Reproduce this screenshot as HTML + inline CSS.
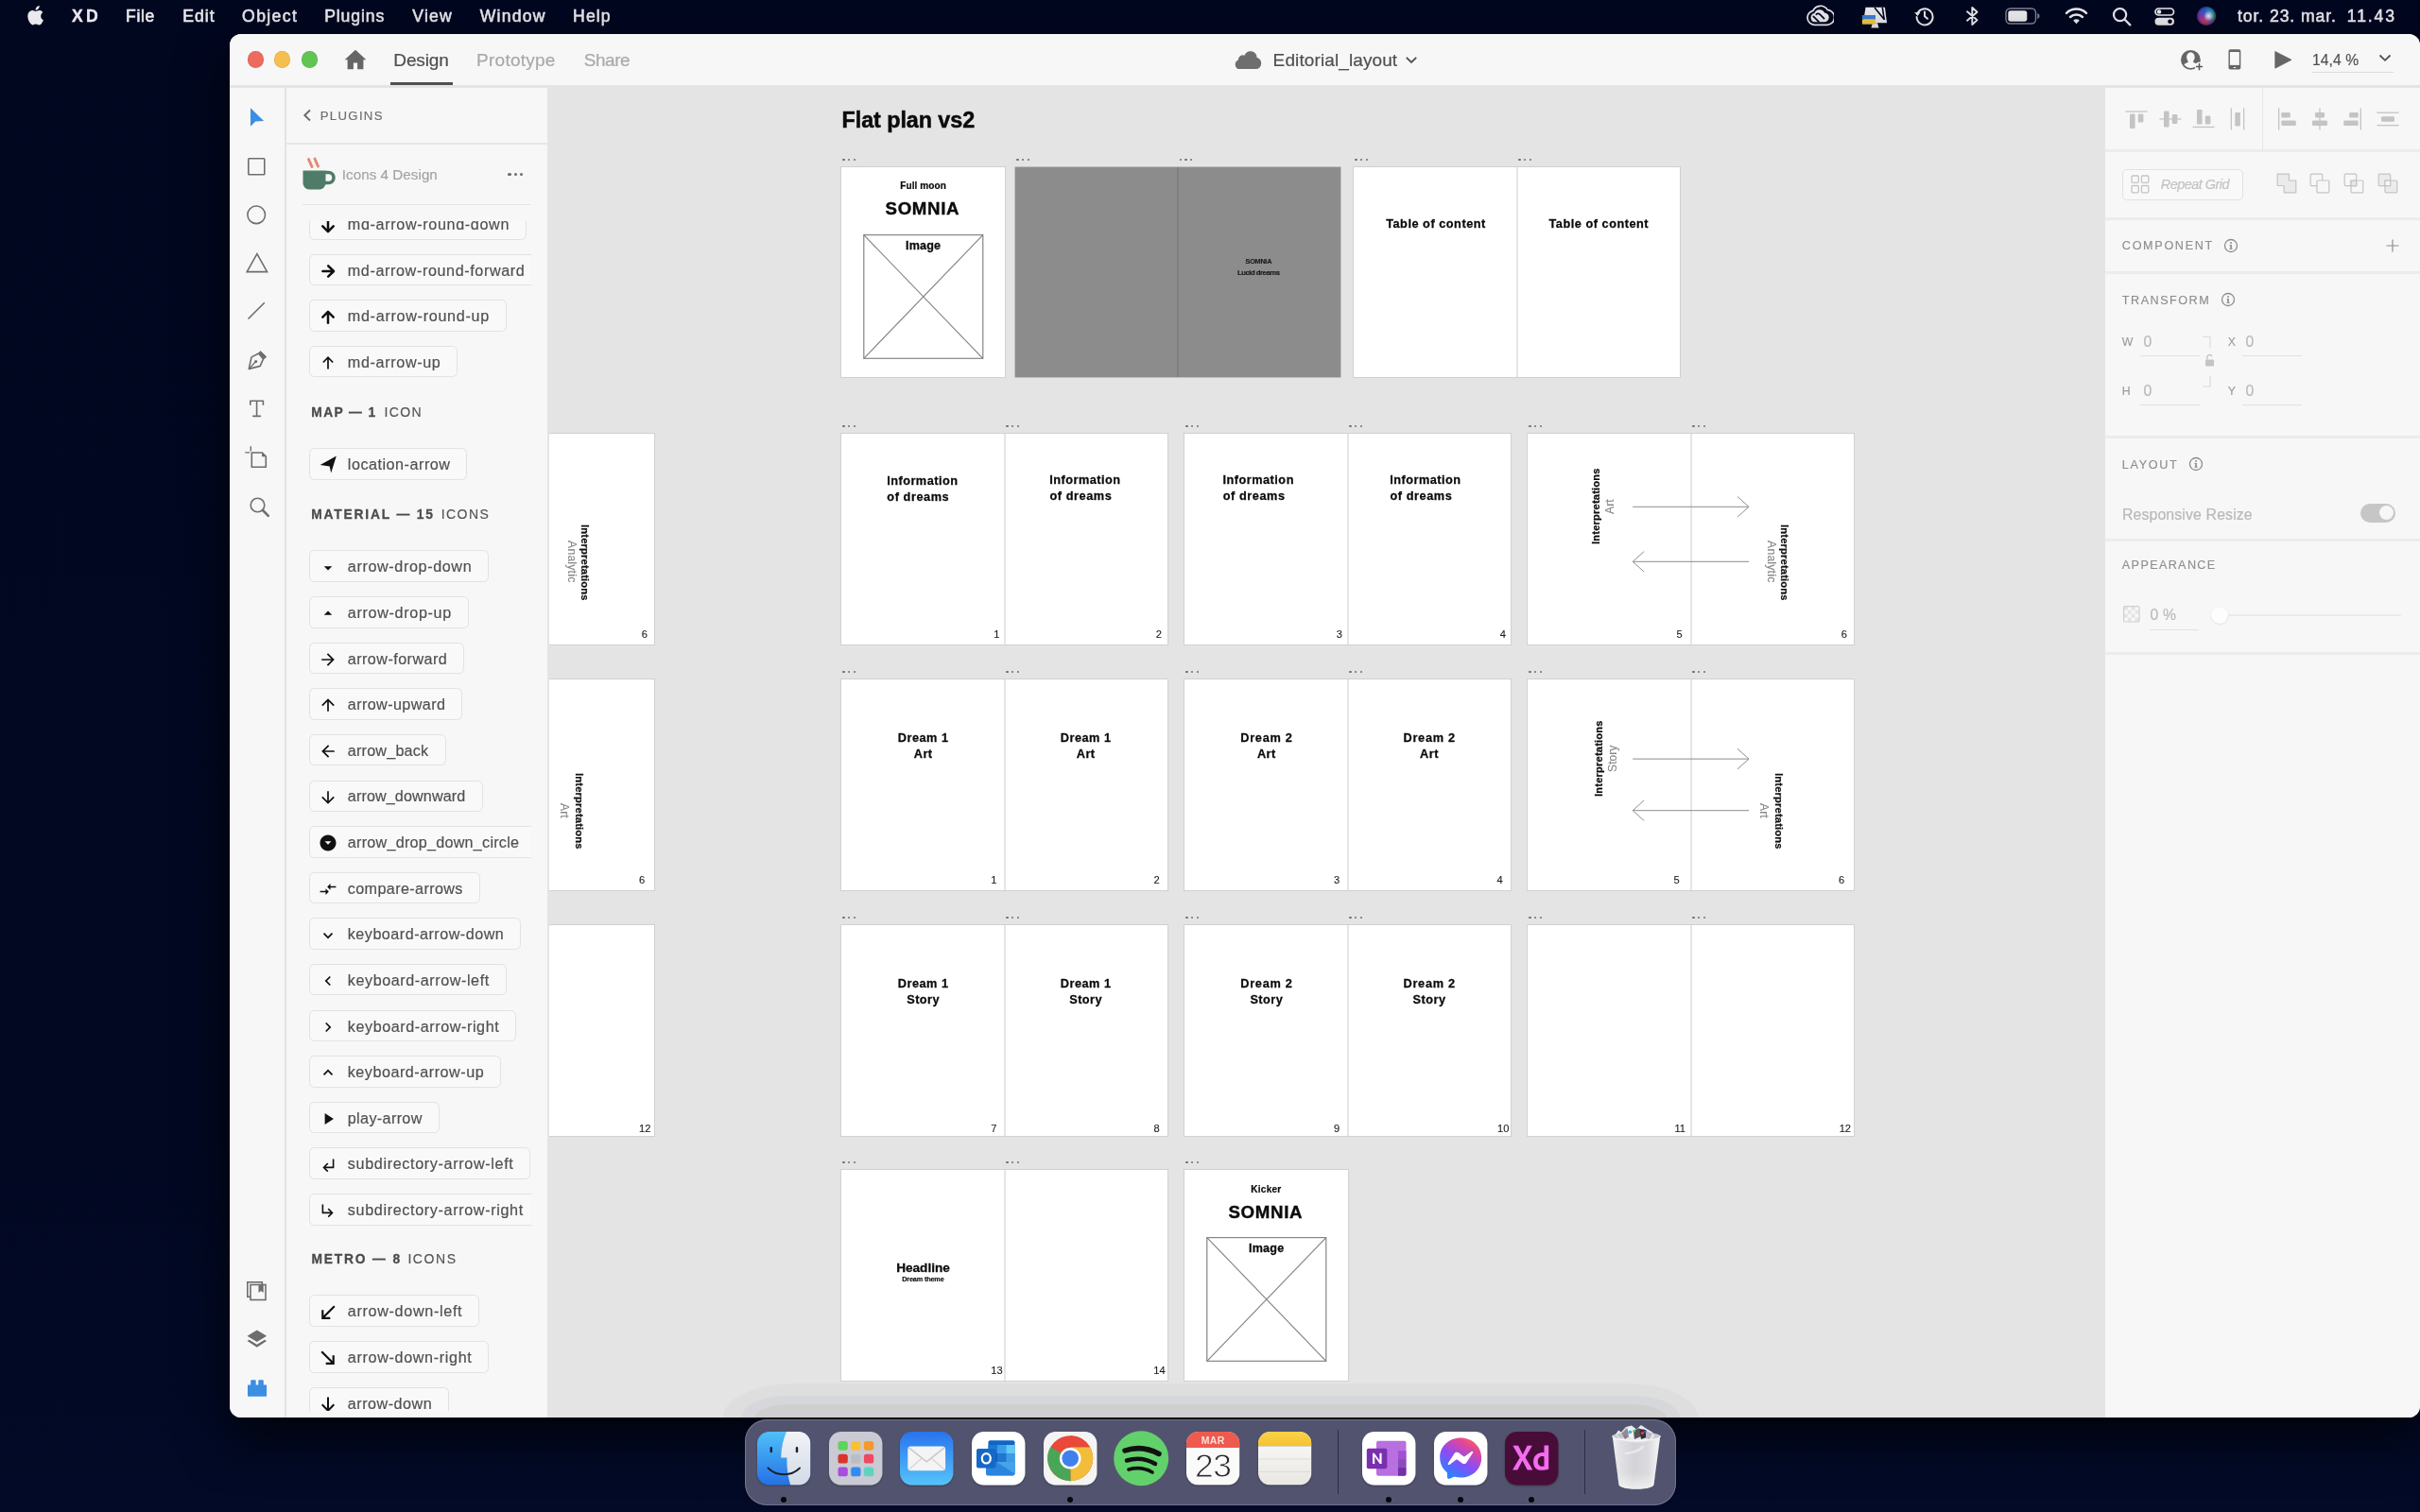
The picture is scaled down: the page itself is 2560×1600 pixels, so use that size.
<!DOCTYPE html>
<html><head><meta charset="utf-8"><title>Adobe XD - Editorial_layout</title>
<style>
*{margin:0;padding:0;box-sizing:content-box}
html,body{width:2560px;height:1600px;overflow:hidden;background:#020822;font-family:"Liberation Sans",sans-serif}
.t{position:absolute;white-space:pre;font-family:"Liberation Sans",sans-serif}
.pb{position:absolute;box-sizing:border-box;height:33.600px;border:1.400px solid #e2e2e2;border-radius:5.500px;background:#f9f9f9}
.d{position:absolute;width:2.600px;height:2.600px;border-radius:50%;background:#6f6f6f}
#desk{position:absolute;left:0;top:0;width:2560px;height:1600px;background:linear-gradient(180deg,#020720 0,#020822 1200px,#020a27 1600px)}
#win{box-shadow:0 22px 50px 4px rgba(0,0,0,.62),0 0 0 .5px rgba(0,0,0,.4);will-change:transform;position:absolute;left:243px;top:36px;width:2317px;height:1464px;border-radius:12px;background:#e4e4e4;overflow:hidden}
#tb{position:absolute;left:0;top:0;width:2317px;height:54.200px;background:#f7f7f7}
.pn{position:absolute;background:#f7f7f7}
#cv{position:absolute;left:337.500px;top:54.200px;width:1646.500px;height:1410px;overflow:hidden;background:#e4e4e4}
#cvi{position:absolute;left:-580.500px;top:-90.200px;width:2560px;height:1600px}
#abs{position:absolute;left:-243px;top:-36px;width:2560px;height:1600px}
#plc{position:absolute;left:302.500px;top:234px;width:259px;height:1258.500px;overflow:hidden}
#pli{position:absolute;left:-302.500px;top:-234px;width:2560px;height:1600px}
</style></head>
<body>
<div id="desk"></div>
<div id="menubar" style="position:absolute;left:0;top:0;width:2560px;height:34px;will-change:transform">
<svg style="position:absolute;left:27.50px;top:3.50px;" width="21" height="24" viewBox="0 0 21 24"><path fill="#e9e9ee" d="M15.2 12.9c0-2.6 2.1-3.8 2.2-3.9-1.2-1.8-3.1-2-3.7-2-1.6-.2-3.1.9-3.9.9s-2-.9-3.4-.9c-1.7 0-3.3 1-4.2 2.6-1.8 3.1-.5 7.700 1.300 10.200.9 1.200 1.900 2.600 3.200 2.600 1.300-.1 1.800-.8 3.300-.8s2 .8 3.400.8 2.300-1.300 3.100-2.500c1-1.400 1.400-2.800 1.400-2.900-.1 0-2.700-1-2.700-4.100zM12.700 5.300c.7-.900 1.200-2 1-3.200-1 .1-2.300.7-3 1.500-.7.800-1.200 2-1.100 3.100 1.200.100 2.400-.600 3.100-1.400z"/></svg>
<span class="t" style="left:75.90px;top:5.00px;font-size:17.6px;line-height:24px;color:#e9e9ee;font-weight:700;-webkit-text-stroke:0.35px #e9e9ee;letter-spacing:3.450px;">XD</span>
<span class="t" style="left:133.10px;top:5.00px;font-size:17.6px;line-height:24px;color:#e9e9ee;-webkit-text-stroke:0.55px #e9e9ee;letter-spacing:0.646px;">File</span>
<span class="t" style="left:193.30px;top:5.00px;font-size:17.6px;line-height:24px;color:#e9e9ee;-webkit-text-stroke:0.55px #e9e9ee;letter-spacing:1.024px;">Edit</span>
<span class="t" style="left:256.10px;top:5.00px;font-size:17.6px;line-height:24px;color:#e9e9ee;-webkit-text-stroke:0.55px #e9e9ee;letter-spacing:1.367px;">Object</span>
<span class="t" style="left:343.20px;top:5.00px;font-size:17.6px;line-height:24px;color:#e9e9ee;-webkit-text-stroke:0.55px #e9e9ee;letter-spacing:0.896px;">Plugins</span>
<span class="t" style="left:436.30px;top:5.00px;font-size:17.6px;line-height:24px;color:#e9e9ee;-webkit-text-stroke:0.55px #e9e9ee;letter-spacing:1.223px;">View</span>
<span class="t" style="left:507.70px;top:5.00px;font-size:17.6px;line-height:24px;color:#e9e9ee;-webkit-text-stroke:0.55px #e9e9ee;letter-spacing:1.220px;">Window</span>
<span class="t" style="left:606.10px;top:5.00px;font-size:17.6px;line-height:24px;color:#e9e9ee;-webkit-text-stroke:0.55px #e9e9ee;letter-spacing:1.101px;">Help</span>
<span class="t" style="left:2367.00px;top:5.00px;font-size:17.6px;line-height:24px;color:#e9e9ee;-webkit-text-stroke:0.5px #e9e9ee;letter-spacing:0.922px;">tor. 23. mar.</span>
<span class="t" style="left:2482.80px;top:5.00px;font-size:17.6px;line-height:24px;color:#e9e9ee;-webkit-text-stroke:0.5px #e9e9ee;letter-spacing:1.866px;">11.43</span>
<svg style="position:absolute;left:1910.00px;top:5.00px;" width="30" height="24" viewBox="0 0 30 24"><path d="M9.300 21.300a7.600 7.600 0 0 1-1.400-15 8.700 8.700 0 0 1 15.300-.9 7.600 7.600 0 0 1-1.300 15.900z" fill="none" stroke="#e9e9ee" stroke-width="1.700"/><path d="M10 18.300a4.700 4.700 0 0 1-.6-9.300 5.800 5.800 0 0 1 10.600-.5 4.800 4.800 0 0 1-.3 9.800z" fill="#e9e9ee"/><path d="M8.300 12.300l5.600 5.600M11.300 10.300a2.600 2.600 0 0 1 3.800-.2l4.500 4.500" fill="none" stroke="#02071f" stroke-width="1.700" stroke-linecap="round"/></svg>
<svg style="position:absolute;left:1968.00px;top:5.00px;" width="30" height="25" viewBox="0 0 30 25"><path d="M5.500 2.800h20.500l2 16.400H3z" fill="#e9e9ee"/><path d="M15 3l10.400 12.800M23.300 2.800l2 13.200" stroke="#02071f" stroke-width="1.600" fill="none"/><path d="M13 19.200h5l1.600 5.200h-8.200z" fill="#e9e9ee"/><rect x="1.900" y="11" width="14.100" height="4.600" fill="#3a7fd6"/><rect x="1.900" y="15.600" width="14.100" height="5.100" fill="#f2c744"/></svg>
<svg style="position:absolute;left:2024.00px;top:5.00px;" width="24" height="24" viewBox="0 0 24 24"><g fill="none" stroke="#e9e9ee" stroke-width="2" stroke-linecap="round" stroke-linejoin="round"><path d="M4.300 9.500A8.500 8.500 0 1 1 3.600 13"/><path d="M12 7.500V12.300l3 2.500"/></g><path d="M1.200 8.200l3.400 3.900 3-4.300z" fill="#e9e9ee"/></svg>
<svg style="position:absolute;left:2078.00px;top:5.00px;" width="17" height="24" viewBox="0 0 17 24"><path fill="none" stroke="#e9e9ee" stroke-width="1.900" stroke-linejoin="round" stroke-linecap="round" d="M3 7.300l10.500 9-5.200 4.700V3l5.200 4.700L3 16.700"/></svg>
<svg style="position:absolute;left:2121.00px;top:8.00px;" width="38" height="18" viewBox="0 0 38 18"><rect x="1" y="1" width="31.500" height="16" rx="4.500" fill="none" stroke="#e9e9ee" stroke-opacity=".55" stroke-width="1.400"/><rect x="3.300" y="3.300" width="20" height="11.400" rx="2.600" fill="#e9e9ee"/><path d="M34.300 6v6c1.400-.4 2.200-1.600 2.200-3s-.8-2.600-2.200-3z" fill="#e9e9ee" fill-opacity=".55"/></svg>
<svg style="position:absolute;left:2183.50px;top:7.00px;" width="25" height="19" viewBox="0 0 25 19"><g fill="none" stroke="#e9e9ee" stroke-width="2.500" stroke-linecap="round"><path d="M2 6.800a15 15 0 0 1 21 0"/><path d="M6 11a9.500 9.500 0 0 1 13 0"/></g><path d="M12.500 18.300l-3.300-3.600a4.600 4.600 0 0 1 6.600 0z" fill="#e9e9ee"/></svg>
<svg style="position:absolute;left:2233.50px;top:6.50px;" width="21" height="21" viewBox="0 0 21 21"><circle cx="8.600" cy="8.600" r="6.600" fill="none" stroke="#e9e9ee" stroke-width="2.200"/><path d="M13.500 13.500l5.800 5.800" stroke="#e9e9ee" stroke-width="2.400" stroke-linecap="round"/></svg>
<svg style="position:absolute;left:2279.00px;top:7.50px;" width="22" height="19" viewBox="0 0 22 19"><rect x="1" y="1" width="19.500" height="7" rx="3.500" fill="none" stroke="#e9e9ee" stroke-width="1.700"/><circle cx="5" cy="4.500" r="2.300" fill="#e9e9ee"/><rect x=".5" y="10.700" width="20.500" height="8" rx="4" fill="#e9e9ee"/><circle cx="16.500" cy="14.700" r="2.300" fill="#02071f"/></svg>
<div style="position:absolute;left:2324px;top:7px;width:20px;height:20px;border-radius:50%;background:radial-gradient(circle at 62% 50%,#e6e9f2 0,#b9b6e0 14%,rgba(120,110,200,0) 34%),conic-gradient(from 200deg at 50% 50%,#c23a6a,#7a3ab0 20%,#2f5fc8 40%,#2aa0b8 58%,#3a9a70 70%,#7a4a9a 84%,#c23a6a);box-shadow:inset 0 0 3px 1px rgba(10,10,40,.55)"></div>
</div>
<div id="win">
 <div id="tb"></div>
 <div class="pn" style="left:0;top:56.500px;width:57.500px;height:1408px"></div>
 <div class="pn" style="left:59.500px;top:56.500px;width:276px;height:1408px"></div>
 <div id="cv"><div id="cvi">
<span class="t" style="left:890.54px;top:112.00px;font-size:23.34px;line-height:30px;color:#0b0b0b;font-weight:700;-webkit-text-stroke:0.48px #0b0b0b;letter-spacing:-0.056px;">Flat plan vs2</span>
<div style="position:absolute;left:890.00px;top:177.00px;width:172.70px;height:222.00px;background:#fff;box-shadow:0 0 0 1px #d1d1d1"></div><i class="d" style="left:891.3px;top:167.8px"></i><i class="d" style="left:896.9px;top:167.8px"></i><i class="d" style="left:902.5px;top:167.8px"></i>
<span class="t" style="left:952.20px;top:189.00px;font-size:10.02px;line-height:15px;color:#0b0b0b;font-weight:700;-webkit-text-stroke:0.21px #0b0b0b;letter-spacing:0.103px;">Full moon</span>
<span class="t" style="left:936.54px;top:208.00px;font-size:18.67px;line-height:25px;color:#0b0b0b;font-weight:700;-webkit-text-stroke:0.38px #0b0b0b;letter-spacing:0.668px;">SOMNIA</span>
<svg style="position:absolute;left:913.00px;top:247.50px;" width="128" height="133" viewBox="0 0 128 133"><g fill="none" stroke="#858585" stroke-width="1.200"><rect x=".8" y=".6" width="126" height="130.700"/><path d="M.8 .6l126 130.700M126.800 .6L.8 131.300"/></g></svg>
<span class="t" style="left:958.03px;top:251.00px;font-size:12.55px;line-height:18px;color:#0b0b0b;font-weight:700;-webkit-text-stroke:0.26px #0b0b0b;letter-spacing:0.192px;">Image</span>
<div style="position:absolute;left:1073.70px;top:176.80px;width:344.70px;height:222.70px;background:#8c8c8c;box-shadow:0 0 0 .5px #9a9a9a"></div><i class="d" style="left:1075.3px;top:167.8px"></i><i class="d" style="left:1080.9px;top:167.8px"></i><i class="d" style="left:1086.5px;top:167.8px"></i><i class="d" style="left:1247.6px;top:167.8px"></i><i class="d" style="left:1253.2px;top:167.8px"></i><i class="d" style="left:1258.8px;top:167.8px"></i>
<div style="position:absolute;left:1244.90px;top:177.00px;width:1.80px;height:222.00px;background:#808080"></div>
<span class="t" style="left:1317.58px;top:270.00px;font-size:7.29px;line-height:13px;color:#1c1c1c;font-weight:700;-webkit-text-stroke:0.15px #1c1c1c;letter-spacing:-0.262px;">SOMNIA</span>
<span class="t" style="left:1308.88px;top:282.00px;font-size:7.78px;line-height:13px;color:#1c1c1c;font-weight:700;-webkit-text-stroke:0.16px #1c1c1c;letter-spacing:-0.486px;">Lucid dreams</span>
<div style="position:absolute;left:1432.00px;top:177.00px;width:172.20px;height:222.00px;background:#fff;box-shadow:0 0 0 1px #d1d1d1"></div><i class="d" style="left:1433.3px;top:167.8px"></i><i class="d" style="left:1438.9px;top:167.8px"></i><i class="d" style="left:1444.5px;top:167.8px"></i>
<div style="position:absolute;left:1605.00px;top:177.00px;width:172.20px;height:222.00px;background:#fff;box-shadow:0 0 0 1px #d1d1d1"></div><i class="d" style="left:1606.3px;top:167.8px"></i><i class="d" style="left:1611.9px;top:167.8px"></i><i class="d" style="left:1617.5px;top:167.8px"></i>
<div style="position:absolute;left:1603.50px;top:177.00px;width:2.40px;height:222.00px;background:#e5e5e8"></div>
<span class="t" style="left:1466.18px;top:227.00px;font-size:12.74px;line-height:19px;color:#0b0b0b;font-weight:700;-webkit-text-stroke:0.26px #0b0b0b;letter-spacing:0.513px;">Table of content</span>
<span class="t" style="left:1638.53px;top:227.00px;font-size:12.74px;line-height:19px;color:#0b0b0b;font-weight:700;-webkit-text-stroke:0.26px #0b0b0b;letter-spacing:0.513px;">Table of content</span>
<div style="position:absolute;left:890.00px;top:459.00px;width:172.00px;height:223.00px;background:#fff;box-shadow:0 0 0 1px #d1d1d1"></div><i class="d" style="left:891.3px;top:449.8px"></i><i class="d" style="left:896.9px;top:449.8px"></i><i class="d" style="left:902.5px;top:449.8px"></i>
<div style="position:absolute;left:1063.00px;top:459.00px;width:172.00px;height:223.00px;background:#fff;box-shadow:0 0 0 1px #d1d1d1"></div><i class="d" style="left:1064.3px;top:449.8px"></i><i class="d" style="left:1069.9px;top:449.8px"></i><i class="d" style="left:1075.5px;top:449.8px"></i>
<div style="position:absolute;left:1253.00px;top:459.00px;width:172.00px;height:223.00px;background:#fff;box-shadow:0 0 0 1px #d1d1d1"></div><i class="d" style="left:1254.3px;top:449.8px"></i><i class="d" style="left:1259.9px;top:449.8px"></i><i class="d" style="left:1265.5px;top:449.8px"></i>
<div style="position:absolute;left:1426.00px;top:459.00px;width:172.00px;height:223.00px;background:#fff;box-shadow:0 0 0 1px #d1d1d1"></div><i class="d" style="left:1427.3px;top:449.8px"></i><i class="d" style="left:1432.9px;top:449.8px"></i><i class="d" style="left:1438.5px;top:449.8px"></i>
<div style="position:absolute;left:1616.00px;top:459.00px;width:172.00px;height:223.00px;background:#fff;box-shadow:0 0 0 1px #d1d1d1"></div><i class="d" style="left:1617.3px;top:449.8px"></i><i class="d" style="left:1622.9px;top:449.8px"></i><i class="d" style="left:1628.5px;top:449.8px"></i>
<div style="position:absolute;left:1789.00px;top:459.00px;width:172.00px;height:223.00px;background:#fff;box-shadow:0 0 0 1px #d1d1d1"></div><i class="d" style="left:1790.3px;top:449.8px"></i><i class="d" style="left:1795.9px;top:449.8px"></i><i class="d" style="left:1801.5px;top:449.8px"></i>
<div style="position:absolute;left:1061.50px;top:459.00px;width:2.40px;height:223.00px;background:#e5e5e8"></div>
<div style="position:absolute;left:1424.50px;top:459.00px;width:2.40px;height:223.00px;background:#e5e5e8"></div>
<div style="position:absolute;left:1787.50px;top:459.00px;width:2.40px;height:223.00px;background:#e5e5e8"></div>
<div style="position:absolute;left:890.00px;top:719.00px;width:172.00px;height:223.00px;background:#fff;box-shadow:0 0 0 1px #d1d1d1"></div><i class="d" style="left:891.3px;top:709.8px"></i><i class="d" style="left:896.9px;top:709.8px"></i><i class="d" style="left:902.5px;top:709.8px"></i>
<div style="position:absolute;left:1063.00px;top:719.00px;width:172.00px;height:223.00px;background:#fff;box-shadow:0 0 0 1px #d1d1d1"></div><i class="d" style="left:1064.3px;top:709.8px"></i><i class="d" style="left:1069.9px;top:709.8px"></i><i class="d" style="left:1075.5px;top:709.8px"></i>
<div style="position:absolute;left:1253.00px;top:719.00px;width:172.00px;height:223.00px;background:#fff;box-shadow:0 0 0 1px #d1d1d1"></div><i class="d" style="left:1254.3px;top:709.8px"></i><i class="d" style="left:1259.9px;top:709.8px"></i><i class="d" style="left:1265.5px;top:709.8px"></i>
<div style="position:absolute;left:1426.00px;top:719.00px;width:172.00px;height:223.00px;background:#fff;box-shadow:0 0 0 1px #d1d1d1"></div><i class="d" style="left:1427.3px;top:709.8px"></i><i class="d" style="left:1432.9px;top:709.8px"></i><i class="d" style="left:1438.5px;top:709.8px"></i>
<div style="position:absolute;left:1616.00px;top:719.00px;width:172.00px;height:223.00px;background:#fff;box-shadow:0 0 0 1px #d1d1d1"></div><i class="d" style="left:1617.3px;top:709.8px"></i><i class="d" style="left:1622.9px;top:709.8px"></i><i class="d" style="left:1628.5px;top:709.8px"></i>
<div style="position:absolute;left:1789.00px;top:719.00px;width:172.00px;height:223.00px;background:#fff;box-shadow:0 0 0 1px #d1d1d1"></div><i class="d" style="left:1790.3px;top:709.8px"></i><i class="d" style="left:1795.9px;top:709.8px"></i><i class="d" style="left:1801.5px;top:709.8px"></i>
<div style="position:absolute;left:1061.50px;top:719.00px;width:2.40px;height:223.00px;background:#e5e5e8"></div>
<div style="position:absolute;left:1424.50px;top:719.00px;width:2.40px;height:223.00px;background:#e5e5e8"></div>
<div style="position:absolute;left:1787.50px;top:719.00px;width:2.40px;height:223.00px;background:#e5e5e8"></div>
<div style="position:absolute;left:890.00px;top:979.00px;width:172.00px;height:223.00px;background:#fff;box-shadow:0 0 0 1px #d1d1d1"></div><i class="d" style="left:891.3px;top:969.8px"></i><i class="d" style="left:896.9px;top:969.8px"></i><i class="d" style="left:902.5px;top:969.8px"></i>
<div style="position:absolute;left:1063.00px;top:979.00px;width:172.00px;height:223.00px;background:#fff;box-shadow:0 0 0 1px #d1d1d1"></div><i class="d" style="left:1064.3px;top:969.8px"></i><i class="d" style="left:1069.9px;top:969.8px"></i><i class="d" style="left:1075.5px;top:969.8px"></i>
<div style="position:absolute;left:1253.00px;top:979.00px;width:172.00px;height:223.00px;background:#fff;box-shadow:0 0 0 1px #d1d1d1"></div><i class="d" style="left:1254.3px;top:969.8px"></i><i class="d" style="left:1259.9px;top:969.8px"></i><i class="d" style="left:1265.5px;top:969.8px"></i>
<div style="position:absolute;left:1426.00px;top:979.00px;width:172.00px;height:223.00px;background:#fff;box-shadow:0 0 0 1px #d1d1d1"></div><i class="d" style="left:1427.3px;top:969.8px"></i><i class="d" style="left:1432.9px;top:969.8px"></i><i class="d" style="left:1438.5px;top:969.8px"></i>
<div style="position:absolute;left:1616.00px;top:979.00px;width:172.00px;height:223.00px;background:#fff;box-shadow:0 0 0 1px #d1d1d1"></div><i class="d" style="left:1617.3px;top:969.8px"></i><i class="d" style="left:1622.9px;top:969.8px"></i><i class="d" style="left:1628.5px;top:969.8px"></i>
<div style="position:absolute;left:1789.00px;top:979.00px;width:172.00px;height:223.00px;background:#fff;box-shadow:0 0 0 1px #d1d1d1"></div><i class="d" style="left:1790.3px;top:969.8px"></i><i class="d" style="left:1795.9px;top:969.8px"></i><i class="d" style="left:1801.5px;top:969.8px"></i>
<div style="position:absolute;left:1061.50px;top:979.00px;width:2.40px;height:223.00px;background:#e5e5e8"></div>
<div style="position:absolute;left:1424.50px;top:979.00px;width:2.40px;height:223.00px;background:#e5e5e8"></div>
<div style="position:absolute;left:1787.50px;top:979.00px;width:2.40px;height:223.00px;background:#e5e5e8"></div>
<div style="position:absolute;left:519.90px;top:459.00px;width:172.00px;height:223.00px;background:#fff;box-shadow:0 0 0 1px #d1d1d1"></div>
<div style="position:absolute;left:519.90px;top:719.00px;width:172.00px;height:223.00px;background:#fff;box-shadow:0 0 0 1px #d1d1d1"></div>
<div style="position:absolute;left:519.90px;top:979.00px;width:172.00px;height:223.00px;background:#fff;box-shadow:0 0 0 1px #d1d1d1"></div>
<span class="t" style="left:938.13px;top:499.00px;font-size:12.74px;line-height:19px;color:#0b0b0b;font-weight:700;-webkit-text-stroke:0.26px #0b0b0b;letter-spacing:0.487px;">Information</span>
<span class="t" style="left:938.33px;top:516.00px;font-size:12.74px;line-height:19px;color:#0b0b0b;font-weight:700;-webkit-text-stroke:0.26px #0b0b0b;letter-spacing:0.556px;">of dreams</span>
<span class="t" style="left:1110.23px;top:498.00px;font-size:12.74px;line-height:19px;color:#0b0b0b;font-weight:700;-webkit-text-stroke:0.26px #0b0b0b;letter-spacing:0.487px;">Information</span>
<span class="t" style="left:1110.43px;top:515.00px;font-size:12.74px;line-height:19px;color:#0b0b0b;font-weight:700;-webkit-text-stroke:0.26px #0b0b0b;letter-spacing:0.556px;">of dreams</span>
<span class="t" style="left:1293.53px;top:498.00px;font-size:12.74px;line-height:19px;color:#0b0b0b;font-weight:700;-webkit-text-stroke:0.26px #0b0b0b;letter-spacing:0.487px;">Information</span>
<span class="t" style="left:1293.73px;top:515.00px;font-size:12.74px;line-height:19px;color:#0b0b0b;font-weight:700;-webkit-text-stroke:0.26px #0b0b0b;letter-spacing:0.556px;">of dreams</span>
<span class="t" style="left:1470.23px;top:498.00px;font-size:12.74px;line-height:19px;color:#0b0b0b;font-weight:700;-webkit-text-stroke:0.26px #0b0b0b;letter-spacing:0.487px;">Information</span>
<span class="t" style="left:1470.43px;top:515.00px;font-size:12.74px;line-height:19px;color:#0b0b0b;font-weight:700;-webkit-text-stroke:0.26px #0b0b0b;letter-spacing:0.556px;">of dreams</span>
<svg style="position:absolute;left:0;top:0" width="2560" height="1600" viewBox="0 0 2560 1600"><g fill="none" stroke="#8c8c8c" stroke-width="1"><path d="M1727.2 536.3H1850M1838 525.5L1850 536.3L1838 547.0999999999999"/><path d="M1850 594.3H1727.2M1739.2 583.5L1727.2 594.3L1739.2 605.0999999999999"/></g></svg>
<div style="position:absolute;left:1691.60px;top:576.30px;width:0;height:0;transform:rotate(-90deg);transform-origin:0 0"><span class="t" style="left:0.12px;top:-12.00px;font-size:11.18px;line-height:16px;color:#0b0b0b;font-weight:700;-webkit-text-stroke:0.23px #0b0b0b;letter-spacing:0.150px;">Interpretations</span></div>
<div style="position:absolute;left:1707.40px;top:544.20px;width:0;height:0;transform:rotate(-90deg);transform-origin:0 0"><span class="t" style="left:0.07px;top:-13.00px;font-size:12.11px;line-height:18px;color:#868686;-webkit-text-stroke:0.14px #868686;letter-spacing:0.092px;">Art</span></div>
<div style="position:absolute;left:1883.90px;top:554.60px;width:0;height:0;transform:rotate(90deg);transform-origin:0 0"><span class="t" style="left:0.12px;top:-12.00px;font-size:11.18px;line-height:16px;color:#111;font-weight:700;-webkit-text-stroke:0.23px #111;letter-spacing:0.150px;">Interpretations</span></div><div style="position:absolute;left:1870.10px;top:572.00px;width:0;height:0;transform:rotate(90deg);transform-origin:0 0"><span class="t" style="left:0.07px;top:-13.00px;font-size:12.11px;line-height:18px;color:#868686;-webkit-text-stroke:0.14px #868686;letter-spacing:0.251px;">Analytic</span></div>
<div style="position:absolute;left:614.80px;top:554.60px;width:0;height:0;transform:rotate(90deg);transform-origin:0 0"><span class="t" style="left:0.12px;top:-12.00px;font-size:11.18px;line-height:16px;color:#111;font-weight:700;-webkit-text-stroke:0.23px #111;letter-spacing:0.150px;">Interpretations</span></div><div style="position:absolute;left:601.00px;top:572.00px;width:0;height:0;transform:rotate(90deg);transform-origin:0 0"><span class="t" style="left:0.07px;top:-13.00px;font-size:12.11px;line-height:18px;color:#868686;-webkit-text-stroke:0.14px #868686;letter-spacing:0.251px;">Analytic</span></div>
<span class="t" style="left:678.86px;top:663.00px;font-size:11.13px;line-height:16px;color:#1e1e1e;-webkit-text-stroke:0.12px #1e1e1e;">6</span>
<span class="t" style="left:1051.26px;top:663.00px;font-size:11.13px;line-height:16px;color:#1e1e1e;-webkit-text-stroke:0.12px #1e1e1e;">1</span>
<span class="t" style="left:1222.76px;top:663.00px;font-size:11.13px;line-height:16px;color:#1e1e1e;-webkit-text-stroke:0.12px #1e1e1e;">2</span>
<span class="t" style="left:1413.76px;top:663.00px;font-size:11.13px;line-height:16px;color:#1e1e1e;-webkit-text-stroke:0.12px #1e1e1e;">3</span>
<span class="t" style="left:1586.66px;top:663.00px;font-size:11.13px;line-height:16px;color:#1e1e1e;-webkit-text-stroke:0.12px #1e1e1e;">4</span>
<span class="t" style="left:1773.56px;top:663.00px;font-size:11.13px;line-height:16px;color:#1e1e1e;-webkit-text-stroke:0.12px #1e1e1e;">5</span>
<span class="t" style="left:1947.76px;top:663.00px;font-size:11.13px;line-height:16px;color:#1e1e1e;-webkit-text-stroke:0.12px #1e1e1e;">6</span>
<span class="t" style="left:949.78px;top:771.00px;font-size:12.74px;line-height:19px;color:#0b0b0b;font-weight:700;-webkit-text-stroke:0.26px #0b0b0b;letter-spacing:0.493px;">Dream 1</span>
<span class="t" style="left:966.68px;top:788.00px;font-size:12.74px;line-height:19px;color:#0b0b0b;font-weight:700;-webkit-text-stroke:0.26px #0b0b0b;letter-spacing:0.519px;">Art</span>
<span class="t" style="left:1121.78px;top:771.00px;font-size:12.74px;line-height:19px;color:#0b0b0b;font-weight:700;-webkit-text-stroke:0.26px #0b0b0b;letter-spacing:0.493px;">Dream 1</span>
<span class="t" style="left:1138.68px;top:788.00px;font-size:12.74px;line-height:19px;color:#0b0b0b;font-weight:700;-webkit-text-stroke:0.26px #0b0b0b;letter-spacing:0.519px;">Art</span>
<span class="t" style="left:1312.28px;top:771.00px;font-size:12.74px;line-height:19px;color:#0b0b0b;font-weight:700;-webkit-text-stroke:0.26px #0b0b0b;letter-spacing:0.726px;">Dream 2</span>
<span class="t" style="left:1329.88px;top:788.00px;font-size:12.74px;line-height:19px;color:#0b0b0b;font-weight:700;-webkit-text-stroke:0.26px #0b0b0b;letter-spacing:0.519px;">Art</span>
<span class="t" style="left:1484.48px;top:771.00px;font-size:12.74px;line-height:19px;color:#0b0b0b;font-weight:700;-webkit-text-stroke:0.26px #0b0b0b;letter-spacing:0.726px;">Dream 2</span>
<span class="t" style="left:1502.08px;top:788.00px;font-size:12.74px;line-height:19px;color:#0b0b0b;font-weight:700;-webkit-text-stroke:0.26px #0b0b0b;letter-spacing:0.519px;">Art</span>
<svg style="position:absolute;left:0;top:0" width="2560" height="1600" viewBox="0 0 2560 1600"><g fill="none" stroke="#8c8c8c" stroke-width="1"><path d="M1727.2 803.1H1850M1838 792.3000000000001L1850 803.1L1838 813.9"/><path d="M1850 857.7H1727.2M1739.2 846.9000000000001L1727.2 857.7L1739.2 868.5"/></g></svg>
<div style="position:absolute;left:1695.30px;top:843.10px;width:0;height:0;transform:rotate(-90deg);transform-origin:0 0"><span class="t" style="left:0.12px;top:-12.00px;font-size:11.18px;line-height:16px;color:#0b0b0b;font-weight:700;-webkit-text-stroke:0.23px #0b0b0b;letter-spacing:0.150px;">Interpretations</span></div>
<div style="position:absolute;left:1709.50px;top:817.10px;width:0;height:0;transform:rotate(-90deg);transform-origin:0 0"><span class="t" style="left:0.07px;top:-13.00px;font-size:12.11px;line-height:18px;color:#868686;-webkit-text-stroke:0.14px #868686;letter-spacing:0.024px;">Story</span></div>
<div style="position:absolute;left:1877.70px;top:817.70px;width:0;height:0;transform:rotate(90deg);transform-origin:0 0"><span class="t" style="left:0.12px;top:-12.00px;font-size:11.18px;line-height:16px;color:#111;font-weight:700;-webkit-text-stroke:0.23px #111;letter-spacing:0.150px;">Interpretations</span></div><div style="position:absolute;left:1862.00px;top:850.20px;width:0;height:0;transform:rotate(90deg);transform-origin:0 0"><span class="t" style="left:0.07px;top:-13.00px;font-size:12.11px;line-height:18px;color:#868686;-webkit-text-stroke:0.14px #868686;letter-spacing:0.092px;">Art</span></div>
<div style="position:absolute;left:608.60px;top:817.70px;width:0;height:0;transform:rotate(90deg);transform-origin:0 0"><span class="t" style="left:0.12px;top:-12.00px;font-size:11.18px;line-height:16px;color:#111;font-weight:700;-webkit-text-stroke:0.23px #111;letter-spacing:0.150px;">Interpretations</span></div><div style="position:absolute;left:592.90px;top:850.20px;width:0;height:0;transform:rotate(90deg);transform-origin:0 0"><span class="t" style="left:0.07px;top:-13.00px;font-size:12.11px;line-height:18px;color:#868686;-webkit-text-stroke:0.14px #868686;letter-spacing:0.092px;">Art</span></div>
<span class="t" style="left:676.06px;top:923.00px;font-size:11.13px;line-height:16px;color:#1e1e1e;-webkit-text-stroke:0.12px #1e1e1e;">6</span>
<span class="t" style="left:1048.36px;top:923.00px;font-size:11.13px;line-height:16px;color:#1e1e1e;-webkit-text-stroke:0.12px #1e1e1e;">1</span>
<span class="t" style="left:1220.46px;top:923.00px;font-size:11.13px;line-height:16px;color:#1e1e1e;-webkit-text-stroke:0.12px #1e1e1e;">2</span>
<span class="t" style="left:1410.96px;top:923.00px;font-size:11.13px;line-height:16px;color:#1e1e1e;-webkit-text-stroke:0.12px #1e1e1e;">3</span>
<span class="t" style="left:1583.56px;top:923.00px;font-size:11.13px;line-height:16px;color:#1e1e1e;-webkit-text-stroke:0.12px #1e1e1e;">4</span>
<span class="t" style="left:1770.46px;top:923.00px;font-size:11.13px;line-height:16px;color:#1e1e1e;-webkit-text-stroke:0.12px #1e1e1e;">5</span>
<span class="t" style="left:1944.96px;top:923.00px;font-size:11.13px;line-height:16px;color:#1e1e1e;-webkit-text-stroke:0.12px #1e1e1e;">6</span>
<span class="t" style="left:949.78px;top:1031.00px;font-size:12.74px;line-height:19px;color:#0b0b0b;font-weight:700;-webkit-text-stroke:0.26px #0b0b0b;letter-spacing:0.493px;">Dream 1</span>
<span class="t" style="left:959.18px;top:1048.00px;font-size:12.74px;line-height:19px;color:#0b0b0b;font-weight:700;-webkit-text-stroke:0.26px #0b0b0b;letter-spacing:0.468px;">Story</span>
<span class="t" style="left:1121.78px;top:1031.00px;font-size:12.74px;line-height:19px;color:#0b0b0b;font-weight:700;-webkit-text-stroke:0.26px #0b0b0b;letter-spacing:0.493px;">Dream 1</span>
<span class="t" style="left:1131.18px;top:1048.00px;font-size:12.74px;line-height:19px;color:#0b0b0b;font-weight:700;-webkit-text-stroke:0.26px #0b0b0b;letter-spacing:0.468px;">Story</span>
<span class="t" style="left:1312.28px;top:1031.00px;font-size:12.74px;line-height:19px;color:#0b0b0b;font-weight:700;-webkit-text-stroke:0.26px #0b0b0b;letter-spacing:0.726px;">Dream 2</span>
<span class="t" style="left:1322.38px;top:1048.00px;font-size:12.74px;line-height:19px;color:#0b0b0b;font-weight:700;-webkit-text-stroke:0.26px #0b0b0b;letter-spacing:0.468px;">Story</span>
<span class="t" style="left:1484.48px;top:1031.00px;font-size:12.74px;line-height:19px;color:#0b0b0b;font-weight:700;-webkit-text-stroke:0.26px #0b0b0b;letter-spacing:0.726px;">Dream 2</span>
<span class="t" style="left:1494.58px;top:1048.00px;font-size:12.74px;line-height:19px;color:#0b0b0b;font-weight:700;-webkit-text-stroke:0.26px #0b0b0b;letter-spacing:0.468px;">Story</span>
<span class="t" style="left:676.06px;top:1186.00px;font-size:11.13px;line-height:16px;color:#1e1e1e;-webkit-text-stroke:0.12px #1e1e1e;">12</span>
<span class="t" style="left:1048.26px;top:1186.00px;font-size:11.13px;line-height:16px;color:#1e1e1e;-webkit-text-stroke:0.12px #1e1e1e;">7</span>
<span class="t" style="left:1220.46px;top:1186.00px;font-size:11.13px;line-height:16px;color:#1e1e1e;-webkit-text-stroke:0.12px #1e1e1e;">8</span>
<span class="t" style="left:1410.96px;top:1186.00px;font-size:11.13px;line-height:16px;color:#1e1e1e;-webkit-text-stroke:0.12px #1e1e1e;">9</span>
<span class="t" style="left:1583.96px;top:1186.00px;font-size:11.13px;line-height:16px;color:#1e1e1e;-webkit-text-stroke:0.12px #1e1e1e;">10</span>
<span class="t" style="left:1771.46px;top:1186.00px;font-size:11.13px;line-height:16px;color:#1e1e1e;-webkit-text-stroke:0.12px #1e1e1e;">11</span>
<span class="t" style="left:1945.66px;top:1186.00px;font-size:11.13px;line-height:16px;color:#1e1e1e;-webkit-text-stroke:0.12px #1e1e1e;">12</span>
<div style="position:absolute;left:890.00px;top:1238.00px;width:172.00px;height:223.00px;background:#fff;box-shadow:0 0 0 1px #d1d1d1"></div><i class="d" style="left:891.3px;top:1228.8px"></i><i class="d" style="left:896.9px;top:1228.8px"></i><i class="d" style="left:902.5px;top:1228.8px"></i>
<div style="position:absolute;left:1063.00px;top:1238.00px;width:172.00px;height:223.00px;background:#fff;box-shadow:0 0 0 1px #d1d1d1"></div><i class="d" style="left:1064.3px;top:1228.8px"></i><i class="d" style="left:1069.9px;top:1228.8px"></i><i class="d" style="left:1075.5px;top:1228.8px"></i>
<div style="position:absolute;left:1061.50px;top:1238.00px;width:2.40px;height:223.00px;background:#e5e5e8"></div>
<div style="position:absolute;left:1253.00px;top:1238.00px;width:173.00px;height:223.00px;background:#fff;box-shadow:0 0 0 1px #d1d1d1"></div><i class="d" style="left:1254.3px;top:1228.8px"></i><i class="d" style="left:1259.9px;top:1228.8px"></i><i class="d" style="left:1265.5px;top:1228.8px"></i>
<span class="t" style="left:948.14px;top:1332.00px;font-size:13.62px;line-height:19px;color:#0b0b0b;font-weight:700;-webkit-text-stroke:0.28px #0b0b0b;letter-spacing:-0.007px;">Headline</span>
<span class="t" style="left:954.23px;top:1347.00px;font-size:7.29px;line-height:13px;color:#0b0b0b;font-weight:700;-webkit-text-stroke:0.15px #0b0b0b;letter-spacing:-0.164px;">Dream theme</span>
<span class="t" style="left:1048.26px;top:1442.00px;font-size:11.13px;line-height:16px;color:#1e1e1e;-webkit-text-stroke:0.12px #1e1e1e;">13</span>
<span class="t" style="left:1220.36px;top:1442.00px;font-size:11.13px;line-height:16px;color:#1e1e1e;-webkit-text-stroke:0.12px #1e1e1e;">14</span>
<span class="t" style="left:1323.31px;top:1251.00px;font-size:10.02px;line-height:15px;color:#0b0b0b;font-weight:700;-webkit-text-stroke:0.21px #0b0b0b;letter-spacing:0.270px;">Kicker</span>
<span class="t" style="left:1299.49px;top:1270.00px;font-size:18.67px;line-height:25px;color:#0b0b0b;font-weight:700;-webkit-text-stroke:0.38px #0b0b0b;letter-spacing:0.668px;">SOMNIA</span>
<svg style="position:absolute;left:1276.30px;top:1309.30px;" width="128" height="133" viewBox="0 0 128 133"><g fill="none" stroke="#858585" stroke-width="1.200"><rect x=".8" y=".6" width="126" height="130.700"/><path d="M.8 .6l126 130.700M126.800 .6L.8 131.300"/></g></svg>
<span class="t" style="left:1321.08px;top:1312.00px;font-size:12.55px;line-height:18px;color:#0b0b0b;font-weight:700;-webkit-text-stroke:0.26px #0b0b0b;letter-spacing:0.192px;">Image</span>
<div style="position:absolute;left:764.8px;top:1464.1px;width:1031.2px;height:37.9px;background:#dedede;border-radius:76px 76px 0 0/36px 36px 0 0"></div><div style="position:absolute;left:783.6px;top:1477px;width:993.6px;height:25.0px;background:#d6d7da;border-radius:50px 50px 0 0/23px 23px 0 0"></div><div style="position:absolute;left:798.2px;top:1485.6px;width:964.4px;height:16.4px;background:#cfcfd0;border-radius:40px 40px 0 0/14.5px 14.5px 0 0"></div>
 </div></div>
 <div class="pn" style="left:1984px;top:56.500px;width:333px;height:1408px"></div>
 <div id="abs">
<div style="position:absolute;left:261.5px;top:54.2px;width:17.4px;height:17.4px;border-radius:50%;background:#ed6a5e;box-shadow:inset 0 0 0 .6px rgba(0,0,0,.12)"></div>
<div style="position:absolute;left:290.0px;top:54.2px;width:17.4px;height:17.4px;border-radius:50%;background:#f5bf4f;box-shadow:inset 0 0 0 .6px rgba(0,0,0,.12)"></div>
<div style="position:absolute;left:318.5px;top:54.2px;width:17.4px;height:17.4px;border-radius:50%;background:#61c554;box-shadow:inset 0 0 0 .6px rgba(0,0,0,.12)"></div>
<svg style="position:absolute;left:363.50px;top:51.50px;" width="24" height="22" viewBox="0 0 24 22"><path fill="#666" d="M12 .8L.6 11.200h3v10h6.300v-6.700h4.200v6.700h6.300v-10h3z"/></svg>
<span class="t" style="left:416.31px;top:51.00px;font-size:19.01px;line-height:25px;color:#505050;-webkit-text-stroke:0.21px #505050;letter-spacing:-0.117px;">Design</span>
<span class="t" style="left:504.11px;top:51.00px;font-size:19.01px;line-height:25px;color:#a9a9a9;-webkit-text-stroke:0.21px #a9a9a9;letter-spacing:0.240px;">Prototype</span>
<span class="t" style="left:617.81px;top:51.00px;font-size:19.01px;line-height:25px;color:#a9a9a9;-webkit-text-stroke:0.21px #a9a9a9;letter-spacing:-0.485px;">Share</span>
<div style="position:absolute;left:413.00px;top:87.40px;width:65.60px;height:2.80px;background:#505050"></div>
<svg style="position:absolute;left:1304.00px;top:53.50px;" width="31" height="20" viewBox="0 0 31 20"><path transform="translate(-1.500 -3.200) scale(1.050 1.140)" fill="#6e6e6e" d="M6.500 19.500h18.500a5.300 5.300 0 0 0 .9-10.500 6.600 6.600 0 0 0-12.600-2.100 4.600 4.600 0 0 0-6.300 4.300A4.500 4.500 0 0 0 6.500 19.500z"/></svg>
<span class="t" style="left:1346.61px;top:51.00px;font-size:19.01px;line-height:25px;color:#505050;-webkit-text-stroke:0.21px #505050;letter-spacing:0.107px;">Editorial_layout</span>
<svg style="position:absolute;left:1486.00px;top:58.50px;" width="14" height="10" viewBox="0 0 14 10"><path d="M1.800 1.800l5.200 5.200 5.200-5.200" fill="none" stroke="#505050" stroke-width="1.900"/></svg>
<svg style="position:absolute;left:2306.00px;top:52.00px;" width="28" height="26" viewBox="0 0 28 26"><circle cx="11.400" cy="11.400" r="10.400" fill="#666"/><ellipse cx="11.400" cy="8.500" rx="4.300" ry="5.200" fill="#f7f7f7"/><path d="M9.100 12.300C9.100 14.800 5.500 14.600 4.400 16.300A8.400 8.400 0 0 0 18.400 16.300C17.300 14.600 13.700 14.800 13.700 12.300z" fill="#f7f7f7"/><circle cx="20.500" cy="18.600" r="4.900" fill="#f7f7f7"/><path d="M20.500 15v7.200M16.900 18.600h7.200" stroke="#5a5a5a" stroke-width="1.500"/></svg>
<svg style="position:absolute;left:2356.80px;top:52.00px;" width="14" height="22" viewBox="0 0 14 22"><rect x=".5" y=".3" width="12.800" height="21.300" rx="1.800" fill="#666"/><rect x="1.900" y="3" width="10" height="13.900" fill="#f7f7f7"/><rect x="5.700" y="19" width="2.400" height="1" fill="#f7f7f7"/></svg>
<svg style="position:absolute;left:2406.00px;top:54.00px;" width="19" height="19" viewBox="0 0 19 19"><path d="M.8 .5L18 9.300.8 18.200z" fill="#666" stroke="#666" stroke-linejoin="round" stroke-width=".8"/></svg>
<span class="t" style="left:2446.09px;top:53.00px;font-size:15.66px;line-height:21px;color:#505050;-webkit-text-stroke:0.17px #505050;letter-spacing:0.055px;">14,4 %</span>
<div style="position:absolute;left:2446.00px;top:76.00px;width:85.60px;height:1.00px;background:#dcdcdc"></div>
<svg style="position:absolute;left:2516.00px;top:56.50px;" width="14" height="9" viewBox="0 0 14 9"><path d="M1.500 1.500l5.500 5.300 5.500-5.300" fill="none" stroke="#505050" stroke-width="1.800"/></svg>
<svg style="position:absolute;left:264.00px;top:113.00px;" width="17" height="23" viewBox="0 0 17 23"><path d="M1 1.200v19.500l5.300-5.300 8.800-.3z" fill="#3b8fe3"/></svg>
<svg style="position:absolute;left:261.00px;top:165.50px;" width="21" height="21" viewBox="0 0 21 21"><rect x="1.800" y="1.800" width="17" height="17" rx=".8" fill="none" stroke="#6e6e6e" stroke-width="1.600"/></svg>
<svg style="position:absolute;left:260.00px;top:215.50px;" width="23" height="23" viewBox="0 0 23 23"><circle cx="11.200" cy="11.300" r="9.300" fill="none" stroke="#6e6e6e" stroke-width="1.600"/></svg>
<svg style="position:absolute;left:259.00px;top:266.00px;" width="26" height="24" viewBox="0 0 26 24"><path d="M12.900 2.600L2.200 21.600h21.400z" fill="none" stroke="#6e6e6e" stroke-width="1.600" stroke-linejoin="miter"/></svg>
<svg style="position:absolute;left:260.00px;top:318.00px;" width="22" height="22" viewBox="0 0 22 22"><path d="M2.500 19.500L19.800 2.300" fill="none" stroke="#6e6e6e" stroke-width="1.600"/></svg>
<svg style="position:absolute;left:259.50px;top:369.00px;" width="24" height="24" viewBox="0 0 24 24"><path d="M6 8.900L13.700 5l4.800 5.900-3.300 7.500L3.300 21.400z" fill="none" stroke="#6e6e6e" stroke-width="1.600" stroke-width="1.500" stroke-linejoin="round"/><path d="M13.700 5l1.800-2.400 6.250 6-2.650 2.300z" fill="#6e6e6e" stroke="#6e6e6e" stroke-width="1" stroke-linejoin="round"/><path d="M3.600 21.100l6.800-7.300" stroke="#6e6e6e" stroke-width="1.300"/><circle cx="10.700" cy="13.500" r="1.600" fill="#6e6e6e"/></svg>
<svg style="position:absolute;left:262.50px;top:422.00px;" width="18" height="21" viewBox="0 0 18 21"><path d="M1.800 6.300V2.300h13.600v4M8.600 2.300v16M4.800 18.350h7.700" fill="none" stroke="#6e6e6e" stroke-width="1.600" stroke-width="1.900" stroke-linecap="round" stroke-linejoin="round"/></svg>
<svg style="position:absolute;left:257.50px;top:470.50px;" width="26" height="26" viewBox="0 0 26 26"><path d="M7.300 1.200v5.400M1.200 7.900h5" stroke="#6e6e6e" stroke-width="1.400" fill="none"/><path d="M8.300 8h11l4 4v11.200H8.300z" fill="none" stroke="#6e6e6e" stroke-width="1.600" stroke-linejoin="round"/><path d="M19 8v4.300h4.300z" fill="#6e6e6e"/></svg>
<svg style="position:absolute;left:263.00px;top:525.00px;" width="23" height="23" viewBox="0 0 23 23"><circle cx="9.500" cy="9.500" r="7.300" fill="none" stroke="#6e6e6e" stroke-width="1.600" stroke-width="2"/><path d="M15 15l5.800 5.800" stroke="#6e6e6e" stroke-width="2.600" stroke-linecap="round"/></svg>
<svg style="position:absolute;left:260.00px;top:1354.50px;" width="24" height="23" viewBox="0 0 24 23"><rect x="1.800" y="1.800" width="15.500" height="15.500" fill="none" stroke="#6e6e6e" stroke-width="1.600" stroke-width="1.400"/><rect x="5" y="4.500" width="16" height="16" fill="#f7f7f7"  stroke="#6e6e6e" stroke-width="1.600" stroke-width="1.500"/><path d="M13.500 5v8l2.600-2 2.600 2V5z" fill="#6e6e6e"/></svg>
<svg style="position:absolute;left:260.00px;top:1406.00px;" width="24" height="23" viewBox="0 0 24 23"><path d="M11.800 1.500L1.500 7.700l10.300 6.200 10.300-6.200z" fill="#6e6e6e"/><path d="M3.700 11.700l-2.200 1.400 10.300 6.600 10.300-6.600-2.200-1.400-8.100 5z" fill="#6e6e6e"/></svg>
<svg style="position:absolute;left:260.50px;top:1458.50px;" width="22" height="20" viewBox="0 0 22 20"><path d="M1 6.500h3.200V2.200c0-.6.500-1 1-1h3.500c.6 0 1 .4 1 1v4.300h2.600V2.200c0-.6.400-1 1-1h3.500c.5 0 1 .4 1 1v4.300h3.300v11.300c0 .6-.4 1-1 1H2c-.6 0-1-.4-1-1z" fill="#3b8fe3"/></svg>
<svg style="position:absolute;left:319.50px;top:115.00px;" width="10" height="14" viewBox="0 0 10 14"><path d="M8 1.500L2.300 7 8 12.500" fill="none" stroke="#6e6e6e" stroke-width="2"/></svg>
<span class="t" style="left:338.77px;top:113.00px;font-size:13.2px;line-height:19px;color:#6e6e6e;-webkit-text-stroke:0.15px #6e6e6e;letter-spacing:1.300px;">PLUGINS</span>
<div style="position:absolute;left:302.50px;top:151.00px;width:276.00px;height:2.20px;background:#e6e6e6"></div>
<svg style="position:absolute;left:319.00px;top:166.00px;" width="37" height="36" viewBox="0 0 37 36"><path d="M1.500 14.500h24v13.500a6.500 6.500 0 0 1-6.500 6.500H8a6.500 6.500 0 0 1-6.500-6.500z" fill="#4f7c68"/><path d="M25 16.500h3.500a5.500 5.500 0 0 1 0 11H25" fill="none" stroke="#4f7c68" stroke-width="3.600"/><path d="M7.500 2.500l3.500 8M14 2l3.500 8" stroke="#e08c76" stroke-width="3" stroke-linecap="round"/></svg>
<span class="t" style="left:361.78px;top:174.00px;font-size:15.17px;line-height:21px;color:#a3a3a3;-webkit-text-stroke:0.17px #a3a3a3;letter-spacing:0.060px;">Icons 4 Design</span>
<div style="position:absolute;left:537.3px;top:182.8px;width:3.400px;height:3.400px;border-radius:50%;background:#6e6e6e"></div>
<div style="position:absolute;left:543.5px;top:182.8px;width:3.400px;height:3.400px;border-radius:50%;background:#6e6e6e"></div>
<div style="position:absolute;left:549.7px;top:182.8px;width:3.400px;height:3.400px;border-radius:50%;background:#6e6e6e"></div>
<div style="position:absolute;left:320.20px;top:215.70px;width:241.20px;height:1.00px;background:#e2e2e2"></div>
 <div id="plc"><div id="pli">
<div class="pb" style="left:327.3px;top:220.2px;width:229.7px"></div>
<svg style="position:absolute;left:335.00px;top:226.50px;" width="24" height="24" viewBox="0 0 24 24"><path d="M12 6.200v11.600M6.300 12.300L12 18.100l5.700-5.800" fill="none" stroke="#111" stroke-width="2.5" stroke-linecap="round" stroke-linejoin="round"/></svg>
<span class="t" style="left:367.79px;top:226.00px;font-size:16.15px;line-height:22px;color:#505050;-webkit-text-stroke:0.18px #505050;letter-spacing:0.658px;">md-arrow-round-down</span>
<div class="pb" style="left:327.3px;top:268.7px;width:247.7px"></div>
<svg style="position:absolute;left:335.00px;top:274.95px;" width="24" height="24" viewBox="0 0 24 24"><path d="M6.400 12h11.400M12.200 6.300L18 12l-5.800 5.700" fill="none" stroke="#111" stroke-width="2.5" stroke-linecap="round" stroke-linejoin="round"/></svg>
<span class="t" style="left:367.79px;top:275.00px;font-size:16.15px;line-height:22px;color:#505050;-webkit-text-stroke:0.18px #505050;letter-spacing:0.619px;">md-arrow-round-forward</span>
<div class="pb" style="left:327.3px;top:317.4px;width:208.5px"></div>
<svg style="position:absolute;left:335.00px;top:323.65px;" width="24" height="24" viewBox="0 0 24 24"><path d="M12 17.800V6.200M6.300 11.700L12 5.900l5.700 5.800" fill="none" stroke="#111" stroke-width="2.5" stroke-linecap="round" stroke-linejoin="round"/></svg>
<span class="t" style="left:367.79px;top:323.00px;font-size:16.15px;line-height:22px;color:#505050;-webkit-text-stroke:0.18px #505050;letter-spacing:0.706px;">md-arrow-round-up</span>
<div class="pb" style="left:327.3px;top:365.8px;width:157.1px"></div>
<svg style="position:absolute;left:335.00px;top:372.10px;" width="24" height="24" viewBox="0 0 24 24"><path d="M12 18.500V6.500M6.800 11.500L12 6.200l5.200 5.300" fill="none" stroke="#111" stroke-width="1.7" stroke-linecap="butt" stroke-linejoin="miter"/></svg>
<span class="t" style="left:367.79px;top:372.00px;font-size:16.15px;line-height:22px;color:#505050;-webkit-text-stroke:0.18px #505050;letter-spacing:0.658px;">md-arrow-up</span>
<span class="t" style="left:329.24px;top:427.00px;font-size:13.81px;line-height:19px;color:#4b4b4b;font-weight:700;-webkit-text-stroke:0.28px #4b4b4b;letter-spacing:1.403px;">MAP — 1</span>
<span class="t" style="left:406.38px;top:426.00px;font-size:13.99px;line-height:20px;color:#555;-webkit-text-stroke:0.16px #555;letter-spacing:1.455px;">ICON</span>
<div class="pb" style="left:327.3px;top:474.1px;width:167.2px"></div>
<svg style="position:absolute;left:335.00px;top:480.40px;" width="24" height="24" viewBox="0 0 24 24"><path fill="#111" d="M20.800 2.600L3.700 12l10 1.500 1.500 7z"/></svg>
<span class="t" style="left:367.79px;top:480.00px;font-size:16.15px;line-height:22px;color:#505050;-webkit-text-stroke:0.18px #505050;letter-spacing:0.522px;">location-arrow</span>
<span class="t" style="left:329.24px;top:535.00px;font-size:13.81px;line-height:19px;color:#4b4b4b;font-weight:700;-webkit-text-stroke:0.28px #4b4b4b;letter-spacing:1.817px;">MATERIAL — 15</span>
<span class="t" style="left:466.68px;top:534.00px;font-size:13.99px;line-height:20px;color:#555;-webkit-text-stroke:0.16px #555;letter-spacing:1.483px;">ICONS</span>
<div class="pb" style="left:327.3px;top:582.4px;width:189.9px"></div>
<svg style="position:absolute;left:335.00px;top:588.60px;" width="24" height="24" viewBox="0 0 24 24"><g transform="translate(12 12) scale(0.85) translate(-12 -12)"><path fill="#111" d="M7 10l5 5 5-5z"/></g></svg>
<span class="t" style="left:367.79px;top:588.00px;font-size:16.15px;line-height:22px;color:#505050;-webkit-text-stroke:0.18px #505050;letter-spacing:0.632px;">arrow-drop-down</span>
<div class="pb" style="left:327.3px;top:631.0px;width:168.5px"></div>
<svg style="position:absolute;left:335.00px;top:637.22px;" width="24" height="24" viewBox="0 0 24 24"><g transform="translate(12 12) scale(0.85) translate(-12 -12)"><path fill="#111" d="M7 14l5-5 5 5z"/></g></svg>
<span class="t" style="left:367.79px;top:637.00px;font-size:16.15px;line-height:22px;color:#505050;-webkit-text-stroke:0.18px #505050;letter-spacing:0.674px;">arrow-drop-up</span>
<div class="pb" style="left:327.3px;top:679.6px;width:164.0px"></div>
<svg style="position:absolute;left:335.00px;top:685.84px;" width="24" height="24" viewBox="0 0 24 24"><g transform="translate(12 12) scale(0.85) translate(-12 -12)"><path fill="#111" d="M12 4l-1.410 1.410L16.170 11H4v2h12.170l-5.580 5.590L12 20l8-8z"/></g></svg>
<span class="t" style="left:367.79px;top:686.00px;font-size:16.15px;line-height:22px;color:#505050;-webkit-text-stroke:0.18px #505050;letter-spacing:0.450px;">arrow-forward</span>
<div class="pb" style="left:327.3px;top:728.2px;width:162.2px"></div>
<svg style="position:absolute;left:335.00px;top:734.46px;" width="24" height="24" viewBox="0 0 24 24"><g transform="translate(12 12) scale(0.85) translate(-12 -12)"><path fill="#111" d="M4 12l1.410 1.410L11 7.830V20h2V7.830l5.580 5.590L20 12l-8-8-8 8z"/></g></svg>
<span class="t" style="left:367.79px;top:734.00px;font-size:16.15px;line-height:22px;color:#505050;-webkit-text-stroke:0.18px #505050;letter-spacing:0.408px;">arrow-upward</span>
<div class="pb" style="left:327.3px;top:776.8px;width:144.4px"></div>
<svg style="position:absolute;left:335.00px;top:783.08px;" width="24" height="24" viewBox="0 0 24 24"><g transform="translate(12 12) scale(0.85) translate(-12 -12)"><path fill="#111" d="M20 11H7.830l5.590-5.590L12 4l-8 8 8 8 1.410-1.410L7.830 13H20v-2z"/></g></svg>
<span class="t" style="left:367.79px;top:783.00px;font-size:16.15px;line-height:22px;color:#505050;-webkit-text-stroke:0.18px #505050;letter-spacing:0.215px;">arrow_back</span>
<div class="pb" style="left:327.3px;top:825.5px;width:183.6px"></div>
<svg style="position:absolute;left:335.00px;top:831.70px;" width="24" height="24" viewBox="0 0 24 24"><g transform="translate(12 12) scale(0.85) translate(-12 -12)"><path fill="#111" d="M20 12l-1.410-1.410L13 16.170V4h-2v12.170l-5.580-5.590L4 12l8 8 8-8z"/></g></svg>
<span class="t" style="left:367.79px;top:831.00px;font-size:16.15px;line-height:22px;color:#505050;-webkit-text-stroke:0.18px #505050;letter-spacing:0.126px;">arrow_downward</span>
<div class="pb" style="left:327.3px;top:874.1px;width:247.7px"></div>
<svg style="position:absolute;left:335.00px;top:880.32px;" width="24" height="24" viewBox="0 0 24 24"><g transform="translate(12 12) scale(0.85) translate(-12 -12)"><path fill="#111" d="M12 2C6.480 2 2 6.480 2 12s4.480 10 10 10 10-4.480 10-10S17.520 2 12 2zm0 12l-4-4h8l-4 4z"/></g></svg>
<span class="t" style="left:367.79px;top:880.00px;font-size:16.15px;line-height:22px;color:#505050;-webkit-text-stroke:0.18px #505050;letter-spacing:0.256px;">arrow_drop_down_circle</span>
<div class="pb" style="left:327.3px;top:922.7px;width:180.7px"></div>
<svg style="position:absolute;left:335.00px;top:928.94px;" width="24" height="24" viewBox="0 0 24 24"><g transform="translate(12 12) scale(0.84) translate(-12 -12)"><path fill="#111" d="M9.010 14H2v2h7.010v3L13 15l-3.990-4v3zm5.980-1v-3H22V8h-7.010V5L11 9l3.990 4z"/></g></svg>
<span class="t" style="left:367.79px;top:929.00px;font-size:16.15px;line-height:22px;color:#505050;-webkit-text-stroke:0.18px #505050;letter-spacing:0.388px;">compare-arrows</span>
<div class="pb" style="left:327.3px;top:971.3px;width:224.1px"></div>
<svg style="position:absolute;left:335.00px;top:977.56px;" width="24" height="24" viewBox="0 0 24 24"><g transform="translate(12 12) scale(0.85) translate(-12 -12)"><path fill="#111" d="M7.410 8.590L12 13.170l4.590-4.580L18 10l-6 6-6-6 1.410-1.410z"/></g></svg>
<span class="t" style="left:367.79px;top:977.00px;font-size:16.15px;line-height:22px;color:#505050;-webkit-text-stroke:0.18px #505050;letter-spacing:0.496px;">keyboard-arrow-down</span>
<div class="pb" style="left:327.3px;top:1019.9px;width:208.5px"></div>
<svg style="position:absolute;left:335.00px;top:1026.18px;" width="24" height="24" viewBox="0 0 24 24"><g transform="translate(12 12) scale(0.85) translate(-12 -12)"><path fill="#111" d="M15.410 16.590L10.830 12l4.580-4.590L14 6l-6 6 6 6 1.410-1.410z"/></g></svg>
<span class="t" style="left:367.79px;top:1026.00px;font-size:16.15px;line-height:22px;color:#505050;-webkit-text-stroke:0.18px #505050;letter-spacing:0.577px;">keyboard-arrow-left</span>
<div class="pb" style="left:327.3px;top:1068.5px;width:219.0px"></div>
<svg style="position:absolute;left:335.00px;top:1074.80px;" width="24" height="24" viewBox="0 0 24 24"><g transform="translate(12 12) scale(0.85) translate(-12 -12)"><path fill="#111" d="M8.590 16.590L13.170 12 8.590 7.410 10 6l6 6-6 6-1.410-1.410z"/></g></svg>
<span class="t" style="left:367.79px;top:1075.00px;font-size:16.15px;line-height:22px;color:#505050;-webkit-text-stroke:0.18px #505050;letter-spacing:0.580px;">keyboard-arrow-right</span>
<div class="pb" style="left:327.3px;top:1117.2px;width:202.9px"></div>
<svg style="position:absolute;left:335.00px;top:1123.42px;" width="24" height="24" viewBox="0 0 24 24"><g transform="translate(12 12) scale(0.85) translate(-12 -12)"><path fill="#111" d="M7.410 15.410L12 10.830l4.590 4.580L18 14l-6-6-6 6z"/></g></svg>
<span class="t" style="left:367.79px;top:1123.00px;font-size:16.15px;line-height:22px;color:#505050;-webkit-text-stroke:0.18px #505050;letter-spacing:0.523px;">keyboard-arrow-up</span>
<div class="pb" style="left:327.3px;top:1165.8px;width:137.6px"></div>
<svg style="position:absolute;left:335.00px;top:1172.04px;" width="24" height="24" viewBox="0 0 24 24"><g transform="translate(12 12) scale(0.85) translate(-12 -12)"><path fill="#111" d="M8 5v14l11-7z"/></g></svg>
<span class="t" style="left:367.79px;top:1172.00px;font-size:16.15px;line-height:22px;color:#505050;-webkit-text-stroke:0.18px #505050;letter-spacing:0.359px;">play-arrow</span>
<div class="pb" style="left:327.3px;top:1214.4px;width:234.1px"></div>
<svg style="position:absolute;left:335.00px;top:1220.66px;" width="24" height="24" viewBox="0 0 24 24"><g transform="translate(12 12) scale(0.8) translate(-12 -12)"><path fill="#111" d="M11 9l1.420 1.420L8.830 14H18V4h2v12H8.830l3.590 3.580L11 21l-6-6 6-6z"/></g></svg>
<span class="t" style="left:367.79px;top:1220.00px;font-size:16.15px;line-height:22px;color:#505050;-webkit-text-stroke:0.18px #505050;letter-spacing:0.658px;">subdirectory-arrow-left</span>
<div class="pb" style="left:327.3px;top:1263.0px;width:247.7px"></div>
<svg style="position:absolute;left:335.00px;top:1269.28px;" width="24" height="24" viewBox="0 0 24 24"><g transform="translate(12 12) scale(0.8) translate(-12 -12)"><path fill="#111" d="M19 15l-6 6-1.420-1.420L15.170 16H4V4h2v10h9.170l-3.590-3.580L13 9l6 6z"/></g></svg>
<span class="t" style="left:367.79px;top:1269.00px;font-size:16.15px;line-height:22px;color:#505050;-webkit-text-stroke:0.18px #505050;letter-spacing:0.652px;">subdirectory-arrow-right</span>
<span class="t" style="left:329.44px;top:1323.00px;font-size:13.81px;line-height:19px;color:#4b4b4b;font-weight:700;-webkit-text-stroke:0.28px #4b4b4b;letter-spacing:1.836px;">METRO — 8</span>
<span class="t" style="left:431.38px;top:1322.00px;font-size:13.99px;line-height:20px;color:#555;-webkit-text-stroke:0.16px #555;letter-spacing:1.583px;">ICONS</span>
<div class="pb" style="left:327.3px;top:1370.4px;width:179.8px"></div>
<svg style="position:absolute;left:335.00px;top:1376.60px;" width="24" height="24" viewBox="0 0 24 24"><path d="M18.800 5.300L6.800 17.300M6.300 9.300v8.600H14.300" fill="none" stroke="#111" stroke-width="2.2" stroke-linecap="butt" stroke-linejoin="miter"/></svg>
<span class="t" style="left:367.79px;top:1376.00px;font-size:16.15px;line-height:22px;color:#505050;-webkit-text-stroke:0.18px #505050;letter-spacing:0.680px;">arrow-down-left</span>
<div class="pb" style="left:327.3px;top:1419.0px;width:190.1px"></div>
<svg style="position:absolute;left:335.00px;top:1425.25px;" width="24" height="24" viewBox="0 0 24 24"><path d="M5.200 5.300L17.200 17.300M17.700 9.300v8.600H9.700" fill="none" stroke="#111" stroke-width="2.2" stroke-linecap="butt" stroke-linejoin="miter"/></svg>
<span class="t" style="left:367.79px;top:1425.00px;font-size:16.15px;line-height:22px;color:#505050;-webkit-text-stroke:0.18px #505050;letter-spacing:0.663px;">arrow-down-right</span>
<div class="pb" style="left:327.3px;top:1467.6px;width:147.9px"></div>
<svg style="position:absolute;left:335.00px;top:1473.85px;" width="24" height="24" viewBox="0 0 24 24"><path d="M12 4.600v14M5.700 12.300L12 18.800l6.300-6.500" fill="none" stroke="#111" stroke-width="2" stroke-linecap="butt" stroke-linejoin="miter"/></svg>
<span class="t" style="left:367.79px;top:1474.00px;font-size:16.15px;line-height:22px;color:#505050;-webkit-text-stroke:0.18px #505050;letter-spacing:0.505px;">arrow-down</span>
 </div></div>
<div style="position:absolute;left:2227.00px;top:158.30px;width:333.00px;height:3.00px;background:#ececec"></div>
<div style="position:absolute;left:2227.00px;top:229.80px;width:333.00px;height:3.00px;background:#ececec"></div>
<div style="position:absolute;left:2227.00px;top:287.30px;width:333.00px;height:3.00px;background:#ececec"></div>
<div style="position:absolute;left:2227.00px;top:461.40px;width:333.00px;height:3.00px;background:#ececec"></div>
<div style="position:absolute;left:2227.00px;top:569.70px;width:333.00px;height:3.00px;background:#ececec"></div>
<div style="position:absolute;left:2227.00px;top:689.50px;width:333.00px;height:3.00px;background:#ececec"></div>
<div style="position:absolute;left:2393.00px;top:93.00px;width:1.00px;height:65.50px;background:#e4e4e4"></div>
<svg style="position:absolute;left:2247.00px;top:113.10px;" width="26" height="26" viewBox="0 0 26 26"><rect x="1.500" y="4.400" width="23" height="1.300" fill="#c4c4c4"/><rect x="6" y="7.500" width="5.600" height="15.500" rx="1.300" fill="#c4c4c4"/><rect x="14.800" y="7.500" width="5.600" height="9" rx="1.300" fill="#c4c4c4"/></svg>
<svg style="position:absolute;left:2282.70px;top:113.10px;" width="26" height="26" viewBox="0 0 26 26"><rect x="1.500" y="12.300" width="23" height="1.300" fill="#c4c4c4"/><rect x="6" y="4.500" width="5.600" height="17" rx="1.300" fill="#c4c4c4"/><rect x="14.800" y="8" width="5.600" height="10" rx="1.300" fill="#c4c4c4"/></svg>
<svg style="position:absolute;left:2318.40px;top:113.10px;" width="26" height="26" viewBox="0 0 26 26"><rect x="1.500" y="20.800" width="23" height="1.300" fill="#c4c4c4"/><rect x="6" y="3" width="5.600" height="15.500" rx="1.300" fill="#c4c4c4"/><rect x="14.800" y="9.500" width="5.600" height="9" rx="1.300" fill="#c4c4c4"/></svg>
<svg style="position:absolute;left:2354.10px;top:113.10px;" width="26" height="26" viewBox="0 0 26 26"><rect x="5.700" y="1.500" width="1.300" height="23" fill="#c4c4c4"/><rect x="19" y="1.500" width="1.300" height="23" fill="#c4c4c4"/><rect x="10.300" y="6" width="5.600" height="14.500" rx="1.300" fill="#c4c4c4"/></svg>
<svg style="position:absolute;left:2406.00px;top:113.10px;" width="26" height="26" viewBox="0 0 26 26"><rect x="4" y="1.500" width="1.300" height="23" fill="#c4c4c4"/><rect x="7.300" y="6" width="9.500" height="5.600" rx="1.300" fill="#c4c4c4"/><rect x="7.300" y="14.500" width="15.500" height="5.600" rx="1.300" fill="#c4c4c4"/></svg>
<svg style="position:absolute;left:2440.60px;top:113.10px;" width="26" height="26" viewBox="0 0 26 26"><rect x="12.300" y="1.500" width="1.300" height="23" fill="#c4c4c4"/><rect x="8" y="6" width="10" height="5.600" rx="1.300" fill="#c4c4c4"/><rect x="5" y="14.500" width="16" height="5.600" rx="1.300" fill="#c4c4c4"/></svg>
<svg style="position:absolute;left:2476.30px;top:113.10px;" width="26" height="26" viewBox="0 0 26 26"><rect x="20.700" y="1.500" width="1.300" height="23" fill="#c4c4c4"/><rect x="9.200" y="6" width="9.500" height="5.600" rx="1.300" fill="#c4c4c4"/><rect x="3.200" y="14.500" width="15.500" height="5.600" rx="1.300" fill="#c4c4c4"/></svg>
<svg style="position:absolute;left:2512.50px;top:113.10px;" width="26" height="26" viewBox="0 0 26 26"><rect x="1.500" y="5.600" width="23" height="1.300" fill="#c4c4c4"/><rect x="1.500" y="19" width="23" height="1.300" fill="#c4c4c4"/><rect x="6" y="10.200" width="14" height="5.600" rx="1.300" fill="#c4c4c4"/></svg>
<div style="position:absolute;left:2244.80px;top:178.80px;width:128.40px;height:33.40px;border:1.200px solid #e2e2e2;border-radius:5px;box-sizing:border-box;background:#f9f9f9"></div>
<svg style="position:absolute;left:2253.50px;top:185.00px;" width="20" height="20" viewBox="0 0 20 20"><g fill="none" stroke="#c4c4c4" stroke-width="1.300"><rect x="1" y="1" width="7.300" height="7.300" rx="1"/><rect x="11.500" y="1" width="7.300" height="7.300" rx="1"/><rect x="1" y="11.500" width="7.300" height="7.300" rx="1"/><rect x="11.500" y="11.500" width="7.300" height="7.300" rx="1"/></g></svg>
<span class="t" style="left:2285.78px;top:185.00px;font-size:14.38px;line-height:20px;color:#c2c2c2;-webkit-text-stroke:0.16px #c2c2c2;font-style:italic;letter-spacing:-0.469px;">Repeat Grid</span>
<svg style="position:absolute;left:2407.60px;top:183.30px;" width="22" height="22" viewBox="0 0 22 22"><path d="M1.200 1.200h12.300v6.800h7.300v12.800H8.200v-7.300H1.200z" fill="#ebebeb" stroke="#c4c4c4" stroke-width="1.200" stroke-linejoin="round"/></svg>
<svg style="position:absolute;left:2443.30px;top:183.30px;" width="22" height="22" viewBox="0 0 22 22"><rect x="1.200" y="1.200" width="12.500" height="12.500" rx="1" fill="none" stroke="#c4c4c4" stroke-width="1.200"/><rect x="8" y="8" width="12.800" height="12.800" rx="1" fill="#f7f7f7" stroke="#c4c4c4" stroke-width="1.200"/></svg>
<svg style="position:absolute;left:2478.80px;top:183.30px;" width="22" height="22" viewBox="0 0 22 22"><rect x="1.200" y="1.200" width="12.500" height="12.500" rx="1" fill="none" stroke="#c4c4c4" stroke-width="1.200"/><rect x="8" y="8" width="12.800" height="12.800" rx="1" fill="none" stroke="#c4c4c4" stroke-width="1.200"/><rect x="8" y="8" width="5.700" height="5.700" fill="#e6e6e6" stroke="#c4c4c4" stroke-width="1.200"/></svg>
<svg style="position:absolute;left:2514.70px;top:183.30px;" width="22" height="22" viewBox="0 0 22 22"><rect x="1.200" y="1.200" width="12.500" height="12.500" rx="1" fill="#ebebeb" stroke="#c4c4c4" stroke-width="1.200"/><rect x="8" y="8" width="12.800" height="12.800" rx="1" fill="#ebebeb" stroke="#c4c4c4" stroke-width="1.200"/><rect x="8" y="8" width="5.700" height="5.700" fill="#f7f7f7" stroke="#c4c4c4" stroke-width="1.200"/></svg>
<span class="t" style="left:2244.87px;top:251.00px;font-size:12.61px;line-height:18px;color:#8e8e8e;-webkit-text-stroke:0.14px #8e8e8e;letter-spacing:1.674px;">COMPONENT</span>
<svg style="position:absolute;left:2351.80px;top:251.80px;" width="16" height="16" viewBox="0 0 16 16"><circle cx="8" cy="8" r="6.500" fill="none" stroke="#8e8e8e" stroke-width="1.300"/><rect x="7.200" y="7" width="1.700" height="4.500" fill="#8e8e8e"/><rect x="6.500" y="7" width="2" height="1" fill="#8e8e8e"/><rect x="6.400" y="10.700" width="3.300" height="1" fill="#8e8e8e"/><circle cx="8" cy="4.900" r="1" fill="#8e8e8e"/></svg>
<svg style="position:absolute;left:2523.50px;top:252.80px;" width="14" height="14" viewBox="0 0 14 14"><path d="M7 .5v13M.5 7h13" stroke="#8e8e8e" stroke-width="1.200"/></svg>
<span class="t" style="left:2244.87px;top:309.00px;font-size:12.61px;line-height:18px;color:#8e8e8e;-webkit-text-stroke:0.14px #8e8e8e;letter-spacing:1.500px;">TRANSFORM</span>
<svg style="position:absolute;left:2349.00px;top:309.00px;" width="16" height="16" viewBox="0 0 16 16"><circle cx="8" cy="8" r="6.500" fill="none" stroke="#8e8e8e" stroke-width="1.300"/><rect x="7.200" y="7" width="1.700" height="4.500" fill="#8e8e8e"/><rect x="6.500" y="7" width="2" height="1" fill="#8e8e8e"/><rect x="6.400" y="10.700" width="3.300" height="1" fill="#8e8e8e"/><circle cx="8" cy="4.900" r="1" fill="#8e8e8e"/></svg>
<span class="t" style="left:2244.87px;top:353.00px;font-size:12.31px;line-height:18px;color:#9c9c9c;-webkit-text-stroke:0.14px #9c9c9c;">W</span>
<span class="t" style="left:2267.59px;top:351.00px;font-size:15.76px;line-height:21px;color:#b9b9b9;-webkit-text-stroke:0.18px #b9b9b9;">0</span>
<span class="t" style="left:2356.87px;top:353.00px;font-size:12.31px;line-height:18px;color:#9c9c9c;-webkit-text-stroke:0.14px #9c9c9c;">X</span>
<span class="t" style="left:2375.49px;top:351.00px;font-size:15.76px;line-height:21px;color:#b9b9b9;-webkit-text-stroke:0.18px #b9b9b9;">0</span>
<span class="t" style="left:2244.87px;top:405.00px;font-size:12.31px;line-height:18px;color:#9c9c9c;-webkit-text-stroke:0.14px #9c9c9c;">H</span>
<span class="t" style="left:2267.59px;top:403.00px;font-size:15.76px;line-height:21px;color:#b9b9b9;-webkit-text-stroke:0.18px #b9b9b9;">0</span>
<span class="t" style="left:2356.87px;top:405.00px;font-size:12.31px;line-height:18px;color:#9c9c9c;-webkit-text-stroke:0.14px #9c9c9c;">Y</span>
<span class="t" style="left:2375.49px;top:403.00px;font-size:15.76px;line-height:21px;color:#b9b9b9;-webkit-text-stroke:0.18px #b9b9b9;">0</span>
<div style="position:absolute;left:2264.30px;top:376.00px;width:62.40px;height:1.00px;background:#e1e1e1"></div>
<div style="position:absolute;left:2372.00px;top:376.00px;width:63.00px;height:1.00px;background:#e1e1e1"></div>
<div style="position:absolute;left:2264.30px;top:427.60px;width:62.40px;height:1.00px;background:#e1e1e1"></div>
<div style="position:absolute;left:2372.00px;top:427.60px;width:63.00px;height:1.00px;background:#e1e1e1"></div>
<svg style="position:absolute;left:2328.00px;top:354.00px;" width="18" height="58" viewBox="0 0 18 58"><path d="M2.200 2.500h7.800v12M2.200 55h7.800V43.500" fill="none" stroke="#dadada" stroke-width="1.100"/><rect x="5" y="26.500" width="9" height="7" rx="1" fill="#c4c4c4"/><path d="M6.800 26.500v-2.300a2.700 2.700 0 0 1 5.200-1" fill="none" stroke="#c4c4c4" stroke-width="1.400"/></svg>
<span class="t" style="left:2244.87px;top:483.00px;font-size:12.61px;line-height:18px;color:#8e8e8e;-webkit-text-stroke:0.14px #8e8e8e;letter-spacing:1.668px;">LAYOUT</span>
<svg style="position:absolute;left:2314.90px;top:483.40px;" width="16" height="16" viewBox="0 0 16 16"><circle cx="8" cy="8" r="6.500" fill="none" stroke="#8e8e8e" stroke-width="1.300"/><rect x="7.200" y="7" width="1.700" height="4.500" fill="#8e8e8e"/><rect x="6.500" y="7" width="2" height="1" fill="#8e8e8e"/><rect x="6.400" y="10.700" width="3.300" height="1" fill="#8e8e8e"/><circle cx="8" cy="4.900" r="1" fill="#8e8e8e"/></svg>
<span class="t" style="left:2244.89px;top:534.00px;font-size:15.86px;line-height:21px;color:#b9b9b9;-webkit-text-stroke:0.18px #b9b9b9;letter-spacing:0.129px;">Responsive Resize</span>
<div style="position:absolute;left:2497.10px;top:533.00px;width:36.80px;height:19.60px;background:#c6c6c6;border-radius:10px"><div style="position:absolute;right:2.300px;top:2.300px;width:15px;height:15px;border-radius:50%;background:#f7f7f7"></div></div>
<span class="t" style="left:2244.87px;top:589.00px;font-size:12.61px;line-height:18px;color:#8e8e8e;-webkit-text-stroke:0.14px #8e8e8e;letter-spacing:1.351px;">APPEARANCE</span>
<svg style="position:absolute;left:2245.50px;top:641.00px;" width="18" height="18" viewBox="0 0 18 18"><rect x="1.0" y="1.0" width="3.900" height="3.900" fill="#e4e4e4"/><rect x="4.9" y="1.0" width="3.900" height="3.900" fill="#f7f7f7"/><rect x="8.8" y="1.0" width="3.900" height="3.900" fill="#e4e4e4"/><rect x="12.7" y="1.0" width="3.900" height="3.900" fill="#f7f7f7"/><rect x="1.0" y="4.9" width="3.900" height="3.900" fill="#f7f7f7"/><rect x="4.9" y="4.9" width="3.900" height="3.900" fill="#e4e4e4"/><rect x="8.8" y="4.9" width="3.900" height="3.900" fill="#f7f7f7"/><rect x="12.7" y="4.9" width="3.900" height="3.900" fill="#e4e4e4"/><rect x="1.0" y="8.8" width="3.900" height="3.900" fill="#e4e4e4"/><rect x="4.9" y="8.8" width="3.900" height="3.900" fill="#f7f7f7"/><rect x="8.8" y="8.8" width="3.900" height="3.900" fill="#e4e4e4"/><rect x="12.7" y="8.8" width="3.900" height="3.900" fill="#f7f7f7"/><rect x="1.0" y="12.7" width="3.900" height="3.900" fill="#f7f7f7"/><rect x="4.9" y="12.7" width="3.900" height="3.900" fill="#e4e4e4"/><rect x="8.8" y="12.7" width="3.900" height="3.900" fill="#f7f7f7"/><rect x="12.7" y="12.7" width="3.900" height="3.900" fill="#e4e4e4"/><rect x=".6" y=".6" width="16.400" height="16.400" rx="1" fill="none" stroke="#cfcfcf" stroke-width="1.200"/></svg>
<span class="t" style="left:2274.59px;top:640.00px;font-size:15.76px;line-height:21px;color:#b9b9b9;-webkit-text-stroke:0.18px #b9b9b9;letter-spacing:0.082px;">0 %</span>
<div style="position:absolute;left:2274.00px;top:666.00px;width:52.00px;height:1.00px;background:#e1e1e1"></div>
<div style="position:absolute;left:2352.00px;top:649.60px;width:187.50px;height:2.80px;background:#ebebeb;border-radius:2px"></div>
<div style="position:absolute;left:2338.60px;top:641.80px;width:18.40px;height:18.40px;background:#fdfdfd;border-radius:50%;box-shadow:0 .5px 2px rgba(0,0,0,.14)"></div>
 </div>
</div>
<div id="dock" style="position:absolute;left:0;top:0;width:2560px;height:1600px;will-change:transform">
<div style="position:absolute;left:788.00px;top:1501.50px;width:984.80px;height:91.00px;background:#52546f;border-radius:23px;box-shadow:inset 0 0 0 1px rgba(140,144,170,.55),0 0 0 .6px rgba(0,0,0,.35)"></div>
<div style="position:absolute;left:1414.60px;top:1513.00px;width:1.30px;height:68.00px;background:#2b2d44"></div>
<div style="position:absolute;left:1675.80px;top:1513.00px;width:1.30px;height:68.00px;background:#2b2d44"></div>
<div style="position:absolute;left:825.50px;top:1583.70px;width:6.00px;height:6.00px;background:#05060c;border-radius:50%"></div>
<div style="position:absolute;left:1128.50px;top:1583.70px;width:6.00px;height:6.00px;background:#05060c;border-radius:50%"></div>
<div style="position:absolute;left:1465.70px;top:1583.70px;width:6.00px;height:6.00px;background:#05060c;border-radius:50%"></div>
<div style="position:absolute;left:1541.50px;top:1583.70px;width:6.00px;height:6.00px;background:#05060c;border-radius:50%"></div>
<div style="position:absolute;left:1617.20px;top:1583.70px;width:6.00px;height:6.00px;background:#05060c;border-radius:50%"></div>
<svg style="position:absolute;left:798.8px;top:1513.3px" width="60.4" height="62.4" viewBox="-2 -2 60.400 62.400"><filter id="ds" x="-10%" y="-10%" width="120%" height="130%"><feDropShadow dx="0" dy="1" stdDeviation="1" flood-opacity=".3"/></filter><linearGradient id="fg1" x1="0" y1="0" x2="0" y2="1"><stop offset="0" stop-color="#4fc0f8"/><stop offset="1" stop-color="#2471e6"/></linearGradient><linearGradient id="fg2" x1="0" y1="0" x2="0" y2="1"><stop offset="0" stop-color="#f1f3f6"/><stop offset="1" stop-color="#d3dbe6"/></linearGradient><g filter="url(#ds)"><clipPath id="fc"><rect x="0" y="0" width="56.400" height="56.400" rx="12.800"/></clipPath><g clip-path="url(#fc)">
<rect width="56.400" height="56.400" fill="url(#fg1)"/>
<path d="M31 0c-3.500 8-5.600 17-5.800 27.500h6.300c-.3 10 .8 20 3.700 28.900H56.400V0z" fill="url(#fg2)"/>
</g></g>
<path d="M31 0c-3.500 8-5.600 17-5.800 27.500h6.300c-.3 10 .8 20 3.700 28.900" fill="none" stroke="#1a1d2a" stroke-width="0" />
<path d="M11.500 38.500c9 9 24.500 9 33.500 0" fill="none" stroke="#1c1f2c" stroke-width="1.900" stroke-linecap="round"/>
<path d="M14.800 17.300v3.800M42 17.300v3.800" stroke="#1c1f2c" stroke-width="2.500" stroke-linecap="round"/></svg>
<svg style="position:absolute;left:874.5px;top:1513.3px" width="60.4" height="62.4" viewBox="-2 -2 60.400 62.400"><filter id="ds2" x="-10%" y="-10%" width="120%" height="130%"><feDropShadow dx="0" dy="1" stdDeviation="1" flood-opacity=".3"/></filter><g filter="url(#ds2)"><rect x="0" y="0" width="56.400" height="56.400" rx="12.800" fill="#c9cad3"/></g><rect x="9.5" y="10.0" width="10.300" height="9.700" rx="2.600" fill="#5fd35a"/><rect x="23.2" y="10.0" width="10.300" height="9.700" rx="2.600" fill="#fbbf34"/><rect x="36.9" y="10.0" width="10.300" height="9.700" rx="2.600" fill="#f39a2b"/><rect x="9.5" y="23.8" width="10.300" height="9.700" rx="2.600" fill="#d9352c"/><rect x="23.2" y="23.8" width="10.300" height="9.700" rx="2.600" fill="#b9bec4"/><rect x="36.9" y="23.8" width="10.300" height="9.700" rx="2.600" fill="#ef4a62"/><rect x="9.5" y="37.6" width="10.300" height="9.700" rx="2.600" fill="#a84de0"/><rect x="23.2" y="37.6" width="10.300" height="9.700" rx="2.600" fill="#2d8cf5"/><rect x="36.9" y="37.6" width="10.300" height="9.700" rx="2.600" fill="#5fd3c0"/></svg>
<svg style="position:absolute;left:950.2px;top:1513.3px" width="60.4" height="62.4" viewBox="-2 -2 60.400 62.400"><filter id="ds3" x="-10%" y="-10%" width="120%" height="130%"><feDropShadow dx="0" dy="1" stdDeviation="1" flood-opacity=".3"/></filter><linearGradient id="mg" x1="0" y1="0" x2="0" y2="1"><stop offset="0" stop-color="#2a73ee"/><stop offset="1" stop-color="#55c3f9"/></linearGradient><g filter="url(#ds3)"><rect x="0" y="0" width="56.400" height="56.400" rx="12.800" fill="url(#mg)"/></g>
<rect x="8.300" y="15.600" width="39.800" height="25.700" rx="3" fill="#f4f4f4"/>
<path d="M9.300 16.800l18.900 15 18.900-15" fill="none" stroke="#c8c8c8" stroke-width="1.500"/>
<path d="M9.300 40.300l13.500-12M47.100 40.300l-13.500-12" fill="none" stroke="#d6d6d6" stroke-width="1.200"/></svg>
<svg style="position:absolute;left:1025.9px;top:1513.3px" width="60.4" height="62.4" viewBox="-2 -2 60.400 62.400"><filter id="ds4" x="-10%" y="-10%" width="120%" height="130%"><feDropShadow dx="0" dy="1" stdDeviation="1" flood-opacity=".3"/></filter><g filter="url(#ds4)"><rect x="0" y="0" width="56.400" height="56.400" rx="12.800" fill="#fff"/></g>
<rect x="17.500" y="9.300" width="28" height="37" rx="2" fill="#1066c4"/>
<rect x="17.500" y="14" width="9.500" height="9" fill="#1a7ad6"/><rect x="27" y="14" width="9.300" height="9" fill="#3d9ce8"/><rect x="36.300" y="14" width="9.200" height="9" fill="#62c8f5"/>
<rect x="17.500" y="23" width="9.500" height="9" fill="#135fb5"/><rect x="27" y="23" width="9.300" height="9" fill="#1f77d0"/><rect x="36.300" y="23" width="9.200" height="9" fill="#3b9be6"/>
<path d="M15 32l30.500 0v12.500a2 2 0 0 1-2 2H17a2 2 0 0 1-2-2z" fill="#2a86dc"/><path d="M26 32l19.500 12.500V32z" fill="#4fa9ee" opacity=".8"/>
<rect x="5" y="18" width="20.500" height="20.500" rx="2" fill="#1668c6"/>
<ellipse cx="15.300" cy="28.300" rx="4.500" ry="5.200" fill="none" stroke="#fff" stroke-width="2.200"/></svg>
<svg style="position:absolute;left:1101.6px;top:1513.3px" width="60.4" height="62.4" viewBox="-2 -2 60.400 62.400"><filter id="ds5" x="-10%" y="-10%" width="120%" height="130%"><feDropShadow dx="0" dy="1" stdDeviation="1" flood-opacity=".3"/></filter><g filter="url(#ds5)"><rect x="0" y="0" width="56.400" height="56.400" rx="12.800" fill="#f4f4f4"/></g>
<circle cx="28.200" cy="28.200" r="24" fill="#e8493a"/>
<path d="M28.200 28.200L7.400 16.200A24 24 0 0 0 28.800 52.200z" fill="#4aa657"/>
<path d="M28.200 28.200L28.800 52.200A24 24 0 0 0 49 16.200H28.200z" fill="#f2bd3a"/>
<path d="M28.200 4.200A24 24 0 0 1 49 16.200H28.200z" fill="#e8493a"/>
<circle cx="28.200" cy="28.200" r="11.300" fill="#fff"/><circle cx="28.200" cy="28.200" r="8.800" fill="#3f81ec"/></svg>
<svg style="position:absolute;left:1177.4px;top:1513.3px" width="60.4" height="62.4" viewBox="-2 -2 60.400 62.400"><circle cx="28.200" cy="28.200" r="29" fill="#62d16b"/>
<g fill="none" stroke="#111" stroke-linecap="round"><path d="M11 20c12-4 25-2.500 36 3.500" stroke-width="5.500"/><path d="M13 30.500c10-3 21-1.800 30 3.500" stroke-width="4.500"/><path d="M15 40c8.500-2.400 17.500-1.500 25 3" stroke-width="3.700"/></g></svg>
<svg style="position:absolute;left:1253.1px;top:1513.3px" width="60.4" height="62.4" viewBox="-2 -2 60.400 62.400"><filter id="ds7" x="-10%" y="-10%" width="120%" height="130%"><feDropShadow dx="0" dy="1" stdDeviation="1" flood-opacity=".3"/></filter><g filter="url(#ds7)"><clipPath id="cc"><rect x="0" y="0" width="56.400" height="56.400" rx="12.800"/></clipPath><g clip-path="url(#cc)"><rect width="56.400" height="56.400" fill="#fafafa"/><rect width="56.400" height="17" fill="#ee5a50"/></g></g>
<text x="28.200" y="13.300" font-family="Liberation Sans" font-weight="700" font-size="10.500" fill="#fbe0dc" text-anchor="middle" letter-spacing=".3">MAR</text>
<text x="28.200" y="48.300" font-family="Liberation Sans" font-size="35.500" fill="#2a2a2a" stroke="#fafafa" stroke-width=".9" text-anchor="middle" letter-spacing="-.6">23</text></svg>
<svg style="position:absolute;left:1328.8px;top:1513.3px" width="60.4" height="62.4" viewBox="-2 -2 60.400 62.400"><filter id="ds8" x="-10%" y="-10%" width="120%" height="130%"><feDropShadow dx="0" dy="1" stdDeviation="1" flood-opacity=".3"/></filter><linearGradient id="ng" x1="0" y1="0" x2="0" y2="1"><stop offset="0" stop-color="#fbfbfb"/><stop offset="1" stop-color="#e9e7e1"/></linearGradient><linearGradient id="ny" x1="0" y1="0" x2="0" y2="1"><stop offset="0" stop-color="#fbd248"/><stop offset="1" stop-color="#f6c333"/></linearGradient><g filter="url(#ds8)"><clipPath id="nc"><rect x="0" y="0" width="56.400" height="56.400" rx="12.800"/></clipPath><g clip-path="url(#nc)"><rect width="56.400" height="56.400" fill="url(#ng)"/><rect width="56.400" height="15" fill="url(#ny)"/>
<rect y="15" width="56.400" height="1" fill="#d8d2c4"/><rect y="28.500" width="56.400" height=".9" fill="#dcdad4"/><rect y="42" width="56.400" height=".9" fill="#dcdad4"/></g></g></svg>
<svg style="position:absolute;left:1439.0px;top:1513.3px" width="60.4" height="62.4" viewBox="-2 -2 60.400 62.400"><filter id="ds9" x="-10%" y="-10%" width="120%" height="130%"><feDropShadow dx="0" dy="1" stdDeviation="1" flood-opacity=".3"/></filter><g filter="url(#ds9)"><rect x="0" y="0" width="56.400" height="56.400" rx="12.800" fill="#fff"/></g>
<rect x="15" y="9.800" width="31.500" height="37" rx="2" fill="#b86fe0"/>
<rect x="38" y="20.300" width="8.500" height="8.800" fill="#a150d2"/><rect x="38" y="29.100" width="8.500" height="8.800" fill="#8b4cbc"/><path d="M38 37.900h8.500v6.900a2 2 0 0 1-2 2H38z" fill="#7330a8"/>
<rect x="4.800" y="17.800" width="21.500" height="21.500" rx="2" fill="#7a2fb0"/>
<path d="M11 34V22.800h1.800l5.600 7.800V22.800h2.200V34h-1.900l-5.500-7.700V34z" fill="#fff"/></svg>
<svg style="position:absolute;left:1514.7px;top:1513.3px" width="60.4" height="62.4" viewBox="-2 -2 60.400 62.400"><filter id="ds10" x="-10%" y="-10%" width="120%" height="130%"><feDropShadow dx="0" dy="1" stdDeviation="1" flood-opacity=".3"/></filter><linearGradient id="msg" x1=".2" y1="1" x2=".8" y2="0"><stop offset="0" stop-color="#1a8cff"/><stop offset=".45" stop-color="#8a4cf7"/><stop offset=".8" stop-color="#e0469a"/><stop offset="1" stop-color="#f5675a"/></linearGradient><g filter="url(#ds10)"><rect x="0" y="0" width="56.400" height="56.400" rx="12.800" fill="#fff"/></g>
<path d="M28.200 6.500c-12.500 0-22 9-22 20.800 0 6.200 2.600 11.500 6.900 15.200.7.600.8 1 .8 1.700l.1 4c.1 1.300 1.400 2.100 2.600 1.600l4.400-2c.5-.2 1-.2 1.500-.1 1.800.5 3.700.8 5.700.8 12.500 0 22-9 22-20.800S40.700 6.500 28.200 6.500z" fill="url(#msg)"/>
<path d="M14.800 33.500l6.600-10.300c1-1.600 3.100-2 4.600-.9l5.100 3.800c.5.400 1.100.4 1.600 0l6.900-5.200c.9-.7 2.100.4 1.500 1.400l-6.600 10.300c-1 1.600-3.100 2-4.600.9l-5.100-3.800c-.5-.4-1.100-.4-1.600 0l-6.900 5.200c-.9.700-2.100-.4-1.500-1.400z" fill="#fff"/></svg>
<svg style="position:absolute;left:1590.4px;top:1513.3px" width="60.4" height="62.4" viewBox="-2 -2 60.400 62.400"><filter id="ds11" x="-10%" y="-10%" width="120%" height="130%"><feDropShadow dx="0" dy="1" stdDeviation="1" flood-opacity=".3"/></filter><g filter="url(#ds11)"><rect x="0" y="0" width="56.400" height="56.400" rx="12.800" fill="#470a37"/></g>
<path d="M28.600 15.200l-7 12 7.500 12.700c.2.300 0 .5-.3.500h-4.600c-.3 0-.500-.1-.7-.4l-5-9.600-4.900 9.600c-.2.300-.4.400-.7.400H8.600c-.4 0-.5-.2-.3-.5l7.500-12.500-7.200-12.200c-.2-.3 0-.5.300-.5h4.700c.3 0 .5.100.6.400l4.700 9.200 4.600-9.200c.1-.3.300-.4.600-.4h4.300c.4 0 .5.200.2.500z" fill="#f56cf0"/>
<path d="M38.300 40.800c-5 0-8.200-3.500-8.200-8.900 0-6 4.200-9.800 9.800-9.800.6 0 1 0 1.600.1v-7.500c0-.2.100-.3.300-.3h4.100c.2 0 .3.100.3.300v21.500c0 .8 0 1.800.2 2.800 0 .2-.1.300-.3.400-2.500 1-5.300 1.400-7.800 1.400zm3.200-14.400c-.5-.2-1.100-.3-1.900-.3-2.800 0-4.800 2-4.800 5.500 0 3.800 2.100 5.200 4.400 5.200.8 0 1.600-.1 2.300-.3z" fill="#f56cf0"/></svg>
<svg style="position:absolute;left:1700.00px;top:1506.00px;" width="62" height="72" viewBox="0 0 62 72"><defs><linearGradient id="tg" x1="0" y1="0" x2="1" y2="0"><stop offset="0" stop-color="#f4f4f6"/><stop offset=".12" stop-color="#e4e4e8"/><stop offset=".45" stop-color="#d2d2d6"/><stop offset=".75" stop-color="#dadade"/><stop offset=".93" stop-color="#efeff2"/><stop offset="1" stop-color="#f6f6f8"/></linearGradient>
<linearGradient id="tg2" x1="0" y1="0" x2="0" y2="1"><stop offset="0" stop-color="#fff" stop-opacity="0"/><stop offset=".7" stop-color="#fff" stop-opacity=".05"/><stop offset="1" stop-color="#fff" stop-opacity=".6"/></linearGradient></defs>
<path d="M5.700 13.500L12.400 64.500Q13 69.500 31 69.800Q49 69.500 49.600 64.500L56.300 13.500z" fill="url(#tg)"/>
<path d="M5.700 13.500L12.400 64.500Q13 69.500 31 69.800Q49 69.500 49.600 64.500L56.300 13.500z" fill="url(#tg2)"/>
<path d="M20 32q12-1 18-7" fill="none" stroke="#f0f0f3" stroke-width="2.500" stroke-linecap="round" opacity=".7"/>
<ellipse cx="31" cy="13.800" rx="25.300" ry="4.600" fill="#c9c9ce"/>
<path d="M9 12l3-4.500 3 2 5-5.500 6-1.500 5 4 5-4.500 6 4 6 3.500 2 4.500-4 4-10 2.500-12-.5-11-3z" fill="#e9e9ec"/>
<path d="M15 11l6-6 4 8-6 4z" fill="#8e8e94"/><path d="M22 5l6 2-1 9-4-2z" fill="#f6f6f8"/><path d="M28 8l6-3 2 9-7 3z" fill="#55555c"/><path d="M34 6l7 1 1 8-6 2z" fill="#2e2e38"/><path d="M41 8l7 3-3 6-4-1z" fill="#b9b9bf"/><path d="M10 12l5-2 3 6-5-.5z" fill="#c4c4c9"/>
<circle cx="24.500" cy="9.300" r="1.900" fill="#3fb7ec"/><circle cx="28.500" cy="8.300" r="1.300" fill="#5fd35a"/><circle cx="37.500" cy="10.500" r="1.800" fill="#d63a3a"/><circle cx="40.500" cy="8.800" r="1.400" fill="#3d5fc0"/><circle cx="19.500" cy="14.500" r="1" fill="#c03ac0"/>
<path d="M5.700 13.500q.5 4.600 25.300 4.900q24.800-.3 25.300-4.900" fill="none" stroke="#f7f7f9" stroke-width="1.300"/></svg>
</div>
</body></html>
